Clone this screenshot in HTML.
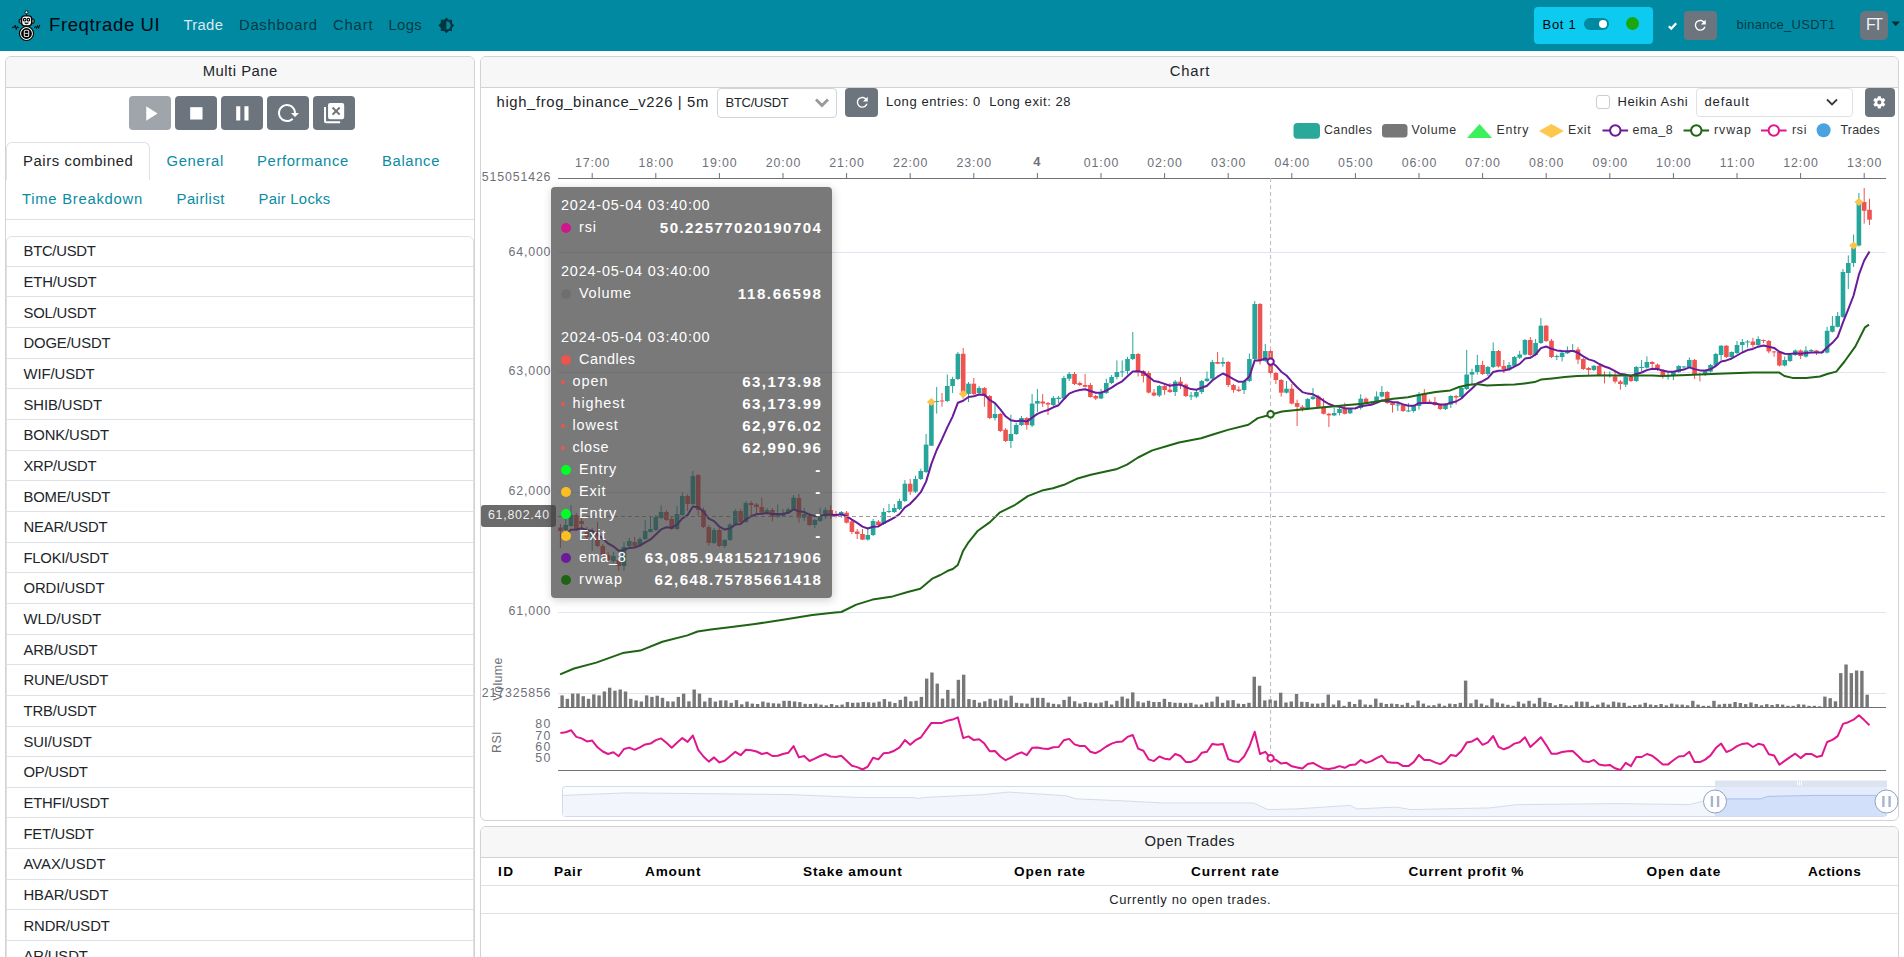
<!DOCTYPE html>
<html><head><meta charset="utf-8"><title>Freqtrade UI</title>
<style>
html,body{margin:0;padding:0;background:#fff;}
body{width:1904px;height:957px;overflow:hidden;position:relative;font-family:"Liberation Sans",sans-serif;}
.t{position:absolute;white-space:nowrap;line-height:1;font-family:"Liberation Sans",sans-serif;}
</style></head><body>
<div style="position:absolute;left:0px;top:0px;width:1904px;height:50.5px;background:#0089a1"></div>
<svg style="position:absolute;left:0;top:0" width="50" height="50" viewBox="0 0 50 50">
<path d="M12 27.3 L14.5 27.3 L15.2 25.2 L16.3 29.5 L17.2 26.5 L18.8 27.8" stroke="#000" stroke-width="1" fill="none"/>
<path d="M34 27.8 L35.5 26.5 L36.5 28.5 L37.5 25.5 L38.5 28.3 L39.8 24.8" stroke="#000" stroke-width="1" fill="none"/>
<line x1="26.5" y1="13.5" x2="26.5" y2="16" stroke="#000" stroke-width="1.1"/>
<circle cx="26.5" cy="12.3" r="1.5" fill="#fff" stroke="#000" stroke-width="0.9"/>
<rect x="19.2" y="19" width="15" height="4.2" rx="1" fill="#888" stroke="#000" stroke-width="1"/>
<rect x="21.6" y="15.8" width="10" height="10" rx="3" fill="#fff" stroke="#000" stroke-width="1.3"/>
<circle cx="24.7" cy="19.7" r="1.3" fill="#fff" stroke="#000" stroke-width="1.1"/>
<circle cx="28.4" cy="19.7" r="1.3" fill="#fff" stroke="#000" stroke-width="1.1"/>
<path d="M24.6 22.9 L28.5 22.9 Q26.5 24.8 24.6 22.9 Z" fill="#000" stroke="#000" stroke-width="0.6"/>
<circle cx="26.5" cy="33.5" r="7" fill="#fff" stroke="#000" stroke-width="1.2"/>
<circle cx="26.5" cy="33.5" r="5.4" fill="#000"/>
<rect x="24.3" y="30.3" width="4.4" height="6.2" rx="1.3" fill="none" stroke="#ddd" stroke-width="1.1"/>
<line x1="24.3" y1="33.4" x2="28.7" y2="33.4" stroke="#ddd" stroke-width="0.9"/>
</svg>
<div class="t" style="left:49.00px;top:15.74px;font-size:18.54px;letter-spacing:0.607px;color:#000814;">Freqtrade UI</div>
<div class="t" style="left:183.50px;top:17.89px;font-size:14.83px;letter-spacing:0.308px;color:rgba(255,255,255,0.85);">Trade</div>
<div class="t" style="left:239.00px;top:17.89px;font-size:14.83px;letter-spacing:0.697px;color:rgba(0,0,0,0.6);">Dashboard</div>
<div class="t" style="left:333.00px;top:17.89px;font-size:14.83px;letter-spacing:0.826px;color:rgba(0,0,0,0.6);">Chart</div>
<div class="t" style="left:388.50px;top:17.89px;font-size:14.83px;letter-spacing:0.355px;color:rgba(0,0,0,0.6);">Logs</div>
<svg style="position:absolute;left:438.20px;top:17.20px" width="16.80" height="16.80" viewBox="0 0 24 24"><path fill="rgba(0,0,0,0.6)" d="M12,18V6A6,6 0 0,1 18,12A6,6 0 0,1 12,18M20,15.31L23.31,12L20,8.69V4H15.31L12,0.69L8.69,4H4V8.69L0.69,12L4,15.31V20H8.69L12,23.31L15.31,20H20V15.31Z"/></svg>
<div style="position:absolute;left:1534px;top:7px;width:119px;height:37px;background:#0dcaf0;border-radius:4px"></div>
<div class="t" style="left:1542.50px;top:18.47px;font-size:12.98px;letter-spacing:0.753px;color:#000;">Bot 1</div>
<div style="position:absolute;left:1584px;top:18px;width:25px;height:12px;background:#0089a1;border-radius:6px"></div>
<div style="position:absolute;left:1598.8px;top:19.8px;width:8.4px;height:8.4px;background:#fff;border-radius:50%"></div>
<div style="position:absolute;left:1626px;top:17px;width:13px;height:13px;background:#1aa80e;border-radius:50%"></div>
<svg style="position:absolute;left:1667px;top:21px" width="11" height="10"><path d="M1.8 5.2 L4.3 7.6 L9.2 2.3" stroke="#fff" stroke-width="2.2" fill="none"/></svg>
<div style="position:absolute;left:1684px;top:11px;width:33px;height:29px;background:#6c757d;border-radius:4px"></div>
<svg style="position:absolute;left:1692.20px;top:17.40px" width="16.50" height="16.50" viewBox="0 0 24 24"><path fill="#fff" d="M17.65,6.35C16.2,4.9 14.21,4 12,4A8,8 0 0,0 4,12A8,8 0 0,0 12,20C15.73,20 18.84,17.45 19.73,14H17.65C16.83,16.33 14.61,18 12,18A6,6 0 0,1 6,12A6,6 0 0,1 12,6C13.66,6 15.14,6.69 16.22,7.78L13,11H20V4L17.65,6.35Z"/></svg>
<div class="t" style="left:1736.50px;top:18.47px;font-size:12.98px;letter-spacing:0.299px;color:rgba(0,0,0,0.6);">binance_USDT1</div>
<div style="position:absolute;left:1860px;top:11px;width:28px;height:29px;background:#6c757d;border-radius:5px"></div>
<div class="t" style="left:1866.09px;top:17.04px;font-size:15.84px;letter-spacing:-2.524px;color:#f1f3f5;">FT</div>
<svg style="position:absolute;left:1891px;top:21px" width="10" height="6" viewBox="0 0 10 6"><path d="M0.5 0.5 L9 0.5 L4.75 5 Z" fill="#000" opacity="0.7"/></svg>
<div style="position:absolute;left:5px;top:56px;width:470px;height:930px;box-sizing:border-box;border:1px solid #d3d3d3;border-radius:6px;background:#fff;overflow:hidden"><div style="height:30px;background:#f7f7f7;border-bottom:1px solid #d3d3d3"></div></div>
<div class="t" style="left:202.69px;top:63.89px;font-size:14.83px;letter-spacing:0.505px;color:#212529;">Multi Pane</div>
<div style="position:absolute;left:129px;top:96px;width:42px;height:34px;background:#a0a5ab;border-radius:4px"></div>
<div style="position:absolute;left:175px;top:96px;width:42px;height:34px;background:#6c757d;border-radius:4px"></div>
<div style="position:absolute;left:221px;top:96px;width:42px;height:34px;background:#6c757d;border-radius:4px"></div>
<div style="position:absolute;left:267px;top:96px;width:42px;height:34px;background:#6c757d;border-radius:4px"></div>
<div style="position:absolute;left:313px;top:96px;width:42px;height:34px;background:#6c757d;border-radius:4px"></div>
<svg style="position:absolute;left:137.50px;top:100.50px" width="24.70" height="24.70" viewBox="0 0 24 24"><path fill="#fff" d="M8,5.14V19.14L19,12.14L8,5.14Z"/></svg>
<svg style="position:absolute;left:183.60px;top:100.80px" width="24.70" height="24.70" viewBox="0 0 24 24"><path fill="#fff" d="M18,18H6V6H18V18Z"/></svg>
<svg style="position:absolute;left:229.50px;top:100.65px" width="24.70" height="24.70" viewBox="0 0 24 24"><path fill="#fff" d="M14,19H18V5H14M6,19H10V5H6V19Z"/></svg>
<svg style="position:absolute;left:276.00px;top:101.00px" width="24.00" height="24.00" viewBox="0 0 24 24"><path fill="#fff" d="M2 12C2 16.97 6.03 21 11 21C13.39 21 15.68 20.06 17.4 18.4L15.9 16.9C14.63 18.25 12.86 19 11 19C4.76 19 1.64 11.46 6.05 7.05C10.46 2.64 18 5.77 18 12H15L19 16H19.1L23 12H20C20 7.03 15.97 3 11 3C6.03 3 2 7.03 2 12Z"/></svg>
<svg style="position:absolute;left:321.80px;top:101.00px" width="24.20" height="24.20" viewBox="0 0 24 24"><path fill-rule="evenodd" fill="#fff" d="M20,2H8A2,2 0 0,0 6,4V16A2,2 0 0,0 8,18H20A2,2 0 0,0 22,16V4A2,2 0 0,0 20,2M4,6H2V20A2,2 0 0,0 4,22H18V20H4V6M9.77,12.84L12.6,10L9.77,7.15L11.17,5.75L14,8.6L16.84,5.75L18.24,7.15L15.4,10L18.24,12.84L16.84,14.25L14,11.4L11.17,14.25L9.77,12.84Z"/></svg>
<div style="position:absolute;left:6px;top:142px;width:144px;height:38px;box-sizing:border-box;border:1px solid #dee2e6;border-bottom:none;border-radius:6px 6px 0 0;background:#fff"></div>
<div class="t" style="left:23.00px;top:153.89px;font-size:14.83px;letter-spacing:0.590px;color:#212529;">Pairs combined</div>
<div class="t" style="left:166.50px;top:153.89px;font-size:14.83px;letter-spacing:0.664px;color:#0b8ba3;">General</div>
<div class="t" style="left:257.00px;top:153.89px;font-size:14.83px;letter-spacing:0.635px;color:#0b8ba3;">Performance</div>
<div class="t" style="left:382.00px;top:153.89px;font-size:14.83px;letter-spacing:0.639px;color:#0b8ba3;">Balance</div>
<div class="t" style="left:22.00px;top:191.89px;font-size:14.83px;letter-spacing:0.727px;color:#0b8ba3;">Time Breakdown</div>
<div class="t" style="left:176.50px;top:191.89px;font-size:14.83px;letter-spacing:0.490px;color:#0b8ba3;">Pairlist</div>
<div class="t" style="left:258.50px;top:191.89px;font-size:14.83px;letter-spacing:0.273px;color:#0b8ba3;">Pair Locks</div>
<div style="position:absolute;left:6px;top:219px;width:468px;height:1px;background:#dee2e6"></div>
<div style="position:absolute;left:6px;top:236px;width:468px;height:740px;box-sizing:border-box;border:1px solid #dee2e6;border-radius:6px"></div>
<div class="t" style="left:23.50px;top:243.89px;font-size:14.83px;letter-spacing:-0.265px;color:#212529;">BTC/USDT</div>
<div style="position:absolute;left:7px;top:266px;width:466px;height:1px;background:#dee2e6"></div>
<div class="t" style="left:23.50px;top:274.89px;font-size:14.83px;letter-spacing:-0.146px;color:#212529;">ETH/USDT</div>
<div style="position:absolute;left:7px;top:296px;width:466px;height:1px;background:#dee2e6"></div>
<div class="t" style="left:23.50px;top:305.89px;font-size:14.83px;letter-spacing:-0.180px;color:#212529;">SOL/USDT</div>
<div style="position:absolute;left:7px;top:327px;width:466px;height:1px;background:#dee2e6"></div>
<div class="t" style="left:23.50px;top:335.89px;font-size:14.83px;letter-spacing:-0.135px;color:#212529;">DOGE/USDT</div>
<div style="position:absolute;left:7px;top:358px;width:466px;height:1px;background:#dee2e6"></div>
<div class="t" style="left:23.50px;top:366.89px;font-size:14.83px;letter-spacing:-0.070px;color:#212529;">WIF/USDT</div>
<div style="position:absolute;left:7px;top:388px;width:466px;height:1px;background:#dee2e6"></div>
<div class="t" style="left:23.50px;top:397.89px;font-size:14.83px;letter-spacing:-0.075px;color:#212529;">SHIB/USDT</div>
<div style="position:absolute;left:7px;top:419px;width:466px;height:1px;background:#dee2e6"></div>
<div class="t" style="left:23.50px;top:427.89px;font-size:14.83px;letter-spacing:-0.117px;color:#212529;">BONK/USDT</div>
<div style="position:absolute;left:7px;top:450px;width:466px;height:1px;background:#dee2e6"></div>
<div class="t" style="left:23.50px;top:458.89px;font-size:14.83px;letter-spacing:-0.290px;color:#212529;">XRP/USDT</div>
<div style="position:absolute;left:7px;top:480px;width:466px;height:1px;background:#dee2e6"></div>
<div class="t" style="left:23.50px;top:489.89px;font-size:14.83px;letter-spacing:-0.159px;color:#212529;">BOME/USDT</div>
<div style="position:absolute;left:7px;top:511px;width:466px;height:1px;background:#dee2e6"></div>
<div class="t" style="left:23.50px;top:519.89px;font-size:14.83px;letter-spacing:-0.195px;color:#212529;">NEAR/USDT</div>
<div style="position:absolute;left:7px;top:542px;width:466px;height:1px;background:#dee2e6"></div>
<div class="t" style="left:23.50px;top:550.89px;font-size:14.83px;letter-spacing:-0.235px;color:#212529;">FLOKI/USDT</div>
<div style="position:absolute;left:7px;top:572px;width:466px;height:1px;background:#dee2e6"></div>
<div class="t" style="left:23.50px;top:580.89px;font-size:14.83px;letter-spacing:-0.060px;color:#212529;">ORDI/USDT</div>
<div style="position:absolute;left:7px;top:603px;width:466px;height:1px;background:#dee2e6"></div>
<div class="t" style="left:23.50px;top:611.89px;font-size:14.83px;letter-spacing:0.044px;color:#212529;">WLD/USDT</div>
<div style="position:absolute;left:7px;top:634px;width:466px;height:1px;background:#dee2e6"></div>
<div class="t" style="left:23.50px;top:642.89px;font-size:14.83px;letter-spacing:-0.120px;color:#212529;">ARB/USDT</div>
<div style="position:absolute;left:7px;top:664px;width:466px;height:1px;background:#dee2e6"></div>
<div class="t" style="left:23.50px;top:672.89px;font-size:14.83px;letter-spacing:-0.212px;color:#212529;">RUNE/USDT</div>
<div style="position:absolute;left:7px;top:695px;width:466px;height:1px;background:#dee2e6"></div>
<div class="t" style="left:23.50px;top:703.89px;font-size:14.83px;letter-spacing:-0.152px;color:#212529;">TRB/USDT</div>
<div style="position:absolute;left:7px;top:726px;width:466px;height:1px;background:#dee2e6"></div>
<div class="t" style="left:23.50px;top:734.89px;font-size:14.83px;letter-spacing:-0.125px;color:#212529;">SUI/USDT</div>
<div style="position:absolute;left:7px;top:756px;width:466px;height:1px;background:#dee2e6"></div>
<div class="t" style="left:23.50px;top:764.89px;font-size:14.83px;letter-spacing:-0.249px;color:#212529;">OP/USDT</div>
<div style="position:absolute;left:7px;top:787px;width:466px;height:1px;background:#dee2e6"></div>
<div class="t" style="left:23.50px;top:795.89px;font-size:14.83px;letter-spacing:-0.186px;color:#212529;">ETHFI/USDT</div>
<div style="position:absolute;left:7px;top:817px;width:466px;height:1px;background:#dee2e6"></div>
<div class="t" style="left:23.50px;top:826.89px;font-size:14.83px;letter-spacing:-0.274px;color:#212529;">FET/USDT</div>
<div style="position:absolute;left:7px;top:848px;width:466px;height:1px;background:#dee2e6"></div>
<div class="t" style="left:23.50px;top:856.89px;font-size:14.83px;letter-spacing:0.015px;color:#212529;">AVAX/USDT</div>
<div style="position:absolute;left:7px;top:879px;width:466px;height:1px;background:#dee2e6"></div>
<div class="t" style="left:23.50px;top:887.89px;font-size:14.83px;letter-spacing:-0.091px;color:#212529;">HBAR/USDT</div>
<div style="position:absolute;left:7px;top:909px;width:466px;height:1px;background:#dee2e6"></div>
<div class="t" style="left:23.50px;top:918.89px;font-size:14.83px;letter-spacing:-0.132px;color:#212529;">RNDR/USDT</div>
<div style="position:absolute;left:7px;top:940px;width:466px;height:1px;background:#dee2e6"></div>
<div class="t" style="left:23.50px;top:948.89px;font-size:14.83px;letter-spacing:-0.138px;color:#212529;">AR/USDT</div>
<div style="position:absolute;left:480px;top:56px;width:1419px;height:765px;box-sizing:border-box;border:1px solid #d3d3d3;border-radius:6px;background:#fff;overflow:hidden"><div style="height:30px;background:#f7f7f7;border-bottom:1px solid #d3d3d3"></div></div>
<div class="t" style="left:1169.71px;top:63.89px;font-size:14.83px;letter-spacing:0.826px;color:#212529;">Chart</div>
<div class="t" style="left:496.50px;top:94.89px;font-size:14.83px;letter-spacing:0.641px;color:#212529;">high_frog_binance_v226 | 5m</div>
<div style="position:absolute;left:717px;top:88px;width:120px;height:30px;box-sizing:border-box;border:1px solid #ced4da;border-radius:4px;background:#fff"></div>
<div class="t" style="left:725.50px;top:96.47px;font-size:12.98px;letter-spacing:-0.232px;color:#212529;">BTC/USDT</div>
<svg style="position:absolute;left:813px;top:96px" width="18" height="12" viewBox="0 0 18 12"><path d="M3 3.5 L9 9.5 L15 3.5" stroke="#999" stroke-width="2.8" fill="none"/></svg>
<div style="position:absolute;left:845px;top:88px;width:33px;height:28.5px;background:#6c757d;border-radius:4px"></div>
<svg style="position:absolute;left:853.50px;top:94.00px" width="16.50" height="16.50" viewBox="0 0 24 24"><path fill="#fff" d="M17.65,6.35C16.2,4.9 14.21,4 12,4A8,8 0 0,0 4,12A8,8 0 0,0 12,20C15.73,20 18.84,17.45 19.73,14H17.65C16.83,16.33 14.61,18 12,18A6,6 0 0,1 6,12A6,6 0 0,1 12,6C13.66,6 15.14,6.69 16.22,7.78L13,11H20V4L17.65,6.35Z"/></svg>
<div class="t" style="left:886.00px;top:95.47px;font-size:12.98px;letter-spacing:0.596px;color:#212529;white-space:pre;">Long entries: 0  Long exit: 28</div>
<div style="position:absolute;left:1596px;top:95px;width:14px;height:14px;box-sizing:border-box;border:1px solid #c7cdd3;border-radius:3px;background:#fff"></div>
<div class="t" style="left:1617.50px;top:95.47px;font-size:12.98px;letter-spacing:0.599px;color:#212529;">Heikin Ashi</div>
<div style="position:absolute;left:1696px;top:88px;width:157px;height:29px;box-sizing:border-box;border:1px solid #dee2e6;border-radius:4px;background:#fff"></div>
<div class="t" style="left:1704.50px;top:95.47px;font-size:12.98px;letter-spacing:0.895px;color:#212529;">default</div>
<svg style="position:absolute;left:1825px;top:97px" width="14" height="10" viewBox="0 0 14 10"><path d="M2 2.5 L7 7.5 L12 2.5" stroke="#343a40" stroke-width="1.8" fill="none"/></svg>
<div style="position:absolute;left:1865px;top:88px;width:30px;height:28.5px;background:#6c757d;border-radius:4px"></div>
<svg style="position:absolute;left:1872.20px;top:94.60px" width="14.60" height="14.60" viewBox="0 0 24 24"><path fill="#fff" d="M12,15.5A3.5,3.5 0 0,1 8.5,12A3.5,3.5 0 0,1 12,8.5A3.5,3.5 0 0,1 15.5,12A3.5,3.5 0 0,1 12,15.5M19.43,12.97C19.47,12.65 19.5,12.33 19.5,12C19.5,11.67 19.47,11.34 19.43,11L21.54,9.37C21.73,9.22 21.78,8.95 21.66,8.73L19.66,5.27C19.54,5.05 19.27,4.96 19.05,5.05L16.56,6.05C16.04,5.66 15.5,5.32 14.87,5.07L14.5,2.42C14.46,2.18 14.25,2 14,2H10C9.75,2 9.54,2.18 9.5,2.42L9.13,5.07C8.5,5.32 7.96,5.66 7.44,6.05L4.95,5.05C4.73,4.96 4.46,5.05 4.34,5.27L2.340,8.73C2.21,8.95 2.27,9.22 2.46,9.37L4.57,11C4.53,11.34 4.5,11.67 4.5,12C4.5,12.33 4.53,12.65 4.57,12.97L2.46,14.63C2.27,14.78 2.21,15.05 2.34,15.27L4.34,18.73C4.46,18.95 4.73,19.030 4.95,18.95L7.44,17.94C7.96,18.34 8.5,18.68 9.13,18.93L9.5,21.58C9.54,21.82 9.75,22 10,22H14C14.25,22 14.46,21.82 14.5,21.58L14.87,18.93C15.5,18.67 16.04,18.34 16.56,17.94L19.05,18.95C19.27,19.03 19.54,18.95 19.66,18.73L21.66,15.27C21.78,15.05 21.73,14.78 21.54,14.63L19.43,12.97Z"/></svg>
<div class="t" style="left:1324.00px;top:123.99px;font-size:12.36px;letter-spacing:0.430px;color:#333;">Candles</div>
<div class="t" style="left:1411.50px;top:123.99px;font-size:12.36px;letter-spacing:0.681px;color:#333;">Volume</div>
<div class="t" style="left:1496.50px;top:123.99px;font-size:12.36px;letter-spacing:0.770px;color:#333;">Entry</div>
<div class="t" style="left:1568.00px;top:123.99px;font-size:12.36px;letter-spacing:0.706px;color:#333;">Exit</div>
<div class="t" style="left:1632.50px;top:123.99px;font-size:12.36px;letter-spacing:0.568px;color:#333;">ema_8</div>
<div class="t" style="left:1714.00px;top:123.99px;font-size:12.36px;letter-spacing:0.963px;color:#333;">rvwap</div>
<div class="t" style="left:1792.00px;top:123.99px;font-size:12.36px;letter-spacing:0.738px;color:#333;">rsi</div>
<div class="t" style="left:1840.50px;top:123.99px;font-size:12.36px;letter-spacing:0.220px;color:#333;">Trades</div>
<div class="t" style="left:574.91px;top:156.99px;font-size:12.36px;letter-spacing:0.914px;color:#6e7079;">17:00</div>
<div class="t" style="left:638.51px;top:156.99px;font-size:12.36px;letter-spacing:0.914px;color:#6e7079;">18:00</div>
<div class="t" style="left:702.11px;top:156.99px;font-size:12.36px;letter-spacing:0.914px;color:#6e7079;">19:00</div>
<div class="t" style="left:765.71px;top:156.99px;font-size:12.36px;letter-spacing:0.914px;color:#6e7079;">20:00</div>
<div class="t" style="left:829.31px;top:156.99px;font-size:12.36px;letter-spacing:0.914px;color:#6e7079;">21:00</div>
<div class="t" style="left:892.91px;top:156.99px;font-size:12.36px;letter-spacing:0.914px;color:#6e7079;">22:00</div>
<div class="t" style="left:956.51px;top:156.99px;font-size:12.36px;letter-spacing:0.914px;color:#6e7079;">23:00</div>
<div class="t" style="left:1033.23px;top:156.48px;font-size:12.96px;letter-spacing:1.142px;color:#6e7079;font-weight:700;">4</div>
<div class="t" style="left:1083.71px;top:156.99px;font-size:12.36px;letter-spacing:0.914px;color:#6e7079;">01:00</div>
<div class="t" style="left:1147.31px;top:156.99px;font-size:12.36px;letter-spacing:0.914px;color:#6e7079;">02:00</div>
<div class="t" style="left:1210.91px;top:156.99px;font-size:12.36px;letter-spacing:0.914px;color:#6e7079;">03:00</div>
<div class="t" style="left:1274.51px;top:156.99px;font-size:12.36px;letter-spacing:0.914px;color:#6e7079;">04:00</div>
<div class="t" style="left:1338.11px;top:156.99px;font-size:12.36px;letter-spacing:0.914px;color:#6e7079;">05:00</div>
<div class="t" style="left:1401.71px;top:156.99px;font-size:12.36px;letter-spacing:0.914px;color:#6e7079;">06:00</div>
<div class="t" style="left:1465.31px;top:156.99px;font-size:12.36px;letter-spacing:0.914px;color:#6e7079;">07:00</div>
<div class="t" style="left:1528.91px;top:156.99px;font-size:12.36px;letter-spacing:0.914px;color:#6e7079;">08:00</div>
<div class="t" style="left:1592.51px;top:156.99px;font-size:12.36px;letter-spacing:0.914px;color:#6e7079;">09:00</div>
<div class="t" style="left:1656.11px;top:156.99px;font-size:12.36px;letter-spacing:0.914px;color:#6e7079;">10:00</div>
<div class="t" style="left:1719.71px;top:156.99px;font-size:12.36px;letter-spacing:1.143px;color:#6e7079;">11:00</div>
<div class="t" style="left:1783.31px;top:156.99px;font-size:12.36px;letter-spacing:0.914px;color:#6e7079;">12:00</div>
<div class="t" style="left:1846.91px;top:156.99px;font-size:12.36px;letter-spacing:0.914px;color:#6e7079;">13:00</div>
<div class="t" style="left:481.78px;top:170.99px;font-size:12.36px;letter-spacing:0.857px;color:#6e7079;">515051426</div>
<div class="t" style="left:508.51px;top:245.99px;font-size:12.36px;letter-spacing:0.838px;color:#6e7079;">64,000</div>
<div class="t" style="left:508.51px;top:364.99px;font-size:12.36px;letter-spacing:0.838px;color:#6e7079;">63,000</div>
<div class="t" style="left:508.51px;top:484.99px;font-size:12.36px;letter-spacing:0.838px;color:#6e7079;">62,000</div>
<div class="t" style="left:508.51px;top:604.99px;font-size:12.36px;letter-spacing:0.838px;color:#6e7079;">61,000</div>
<div class="t" style="left:481.78px;top:686.99px;font-size:12.36px;letter-spacing:0.857px;color:#6e7079;">217325856</div>
<div class="t" style="left:535.23px;top:717.99px;font-size:12.36px;letter-spacing:1.523px;color:#6e7079;">80</div>
<div class="t" style="left:535.23px;top:729.99px;font-size:12.36px;letter-spacing:1.523px;color:#6e7079;">70</div>
<div class="t" style="left:535.23px;top:740.99px;font-size:12.36px;letter-spacing:1.523px;color:#6e7079;">60</div>
<div class="t" style="left:535.23px;top:751.99px;font-size:12.36px;letter-spacing:1.523px;color:#6e7079;">50</div>
<div class="t" style="left:467.5px;top:672px;width:60px;text-align:center;font-size:12.36px;letter-spacing:0.4px;color:#6e7079;transform:rotate(-90deg);line-height:14px">Volume</div>
<div class="t" style="left:467px;top:734.5px;width:60px;text-align:center;font-size:12.36px;letter-spacing:0.4px;color:#6e7079;transform:rotate(-90deg);line-height:14px">RSI</div>
<svg style="position:absolute;left:0;top:0" width="1904" height="957"><rect x="1293.5" y="123" width="26.5" height="15.7" rx="4" fill="#2aa89a"/><rect x="1382" y="124" width="25.5" height="13.5" rx="3.5" fill="#777"/><path d="M1467 138 L1479.5 124 L1492 138 Z" fill="#3cf05c"/><path d="M1539 131 L1551.4 124 L1563.8 131 L1551.4 138 Z" fill="#fcc850"/><line x1="1602.5" y1="130.5" x2="1628.1" y2="130.5" stroke="#6a1b9a" stroke-width="2"/><circle cx="1615.3" cy="130.5" r="5.2" fill="#fff" stroke="#6a1b9a" stroke-width="2"/><line x1="1683.5" y1="130.5" x2="1709.1" y2="130.5" stroke="#1e6414" stroke-width="2"/><circle cx="1696.3" cy="130.5" r="5.2" fill="#fff" stroke="#1e6414" stroke-width="2"/><line x1="1761.0" y1="130.5" x2="1786.6" y2="130.5" stroke="#e0168c" stroke-width="2"/><circle cx="1773.8" cy="130.5" r="5.2" fill="#fff" stroke="#e0168c" stroke-width="2"/><circle cx="1823.6" cy="130.3" r="7" fill="#4aa3df"/><line x1="558" y1="252.5" x2="1886" y2="252.5" stroke="#e0e6f1" stroke-width="1"/><line x1="558" y1="372.5" x2="1886" y2="372.5" stroke="#e0e6f1" stroke-width="1"/><line x1="558" y1="492.5" x2="1886" y2="492.5" stroke="#e0e6f1" stroke-width="1"/><line x1="558" y1="612.5" x2="1886" y2="612.5" stroke="#e0e6f1" stroke-width="1"/><line x1="558" y1="693.5" x2="1886" y2="693.5" stroke="#e0e6f1" stroke-width="1"/><line x1="558" y1="178.5" x2="1886" y2="178.5" stroke="#6e7079" stroke-width="1"/><line x1="592.2" y1="173" x2="592.2" y2="178" stroke="#6e7079" stroke-width="1"/><line x1="655.8" y1="173" x2="655.8" y2="178" stroke="#6e7079" stroke-width="1"/><line x1="719.4" y1="173" x2="719.4" y2="178" stroke="#6e7079" stroke-width="1"/><line x1="783.0" y1="173" x2="783.0" y2="178" stroke="#6e7079" stroke-width="1"/><line x1="846.6" y1="173" x2="846.6" y2="178" stroke="#6e7079" stroke-width="1"/><line x1="910.2" y1="173" x2="910.2" y2="178" stroke="#6e7079" stroke-width="1"/><line x1="973.8" y1="173" x2="973.8" y2="178" stroke="#6e7079" stroke-width="1"/><line x1="1037.4" y1="173" x2="1037.4" y2="178" stroke="#6e7079" stroke-width="1"/><line x1="1101.0" y1="173" x2="1101.0" y2="178" stroke="#6e7079" stroke-width="1"/><line x1="1164.6" y1="173" x2="1164.6" y2="178" stroke="#6e7079" stroke-width="1"/><line x1="1228.2" y1="173" x2="1228.2" y2="178" stroke="#6e7079" stroke-width="1"/><line x1="1291.8" y1="173" x2="1291.8" y2="178" stroke="#6e7079" stroke-width="1"/><line x1="1355.4" y1="173" x2="1355.4" y2="178" stroke="#6e7079" stroke-width="1"/><line x1="1419.0" y1="173" x2="1419.0" y2="178" stroke="#6e7079" stroke-width="1"/><line x1="1482.6" y1="173" x2="1482.6" y2="178" stroke="#6e7079" stroke-width="1"/><line x1="1546.2" y1="173" x2="1546.2" y2="178" stroke="#6e7079" stroke-width="1"/><line x1="1609.8" y1="173" x2="1609.8" y2="178" stroke="#6e7079" stroke-width="1"/><line x1="1673.4" y1="173" x2="1673.4" y2="178" stroke="#6e7079" stroke-width="1"/><line x1="1737.0" y1="173" x2="1737.0" y2="178" stroke="#6e7079" stroke-width="1"/><line x1="1800.6" y1="173" x2="1800.6" y2="178" stroke="#6e7079" stroke-width="1"/><line x1="1864.2" y1="173" x2="1864.2" y2="178" stroke="#6e7079" stroke-width="1"/><line x1="558" y1="707.5" x2="1886" y2="707.5" stroke="#6e7079" stroke-width="1"/><line x1="558" y1="770.5" x2="1886" y2="770.5" stroke="#6e7079" stroke-width="1"/><rect x="560.40" y="695.40" width="3.4" height="11.60" fill="#777"/><rect x="565.68" y="698.80" width="3.4" height="8.20" fill="#777"/><rect x="570.97" y="693.60" width="3.4" height="13.40" fill="#777"/><rect x="576.25" y="693.60" width="3.4" height="13.40" fill="#777"/><rect x="581.53" y="696.20" width="3.4" height="10.80" fill="#777"/><rect x="586.82" y="698.80" width="3.4" height="8.20" fill="#777"/><rect x="592.10" y="694.40" width="3.4" height="12.60" fill="#777"/><rect x="597.39" y="695.40" width="3.4" height="11.60" fill="#777"/><rect x="602.67" y="691.50" width="3.4" height="15.50" fill="#777"/><rect x="607.95" y="687.70" width="3.4" height="19.30" fill="#777"/><rect x="613.24" y="690.70" width="3.4" height="16.30" fill="#777"/><rect x="618.52" y="689.50" width="3.4" height="17.50" fill="#777"/><rect x="623.80" y="691.50" width="3.4" height="15.50" fill="#777"/><rect x="629.09" y="698.80" width="3.4" height="8.20" fill="#777"/><rect x="634.37" y="700.40" width="3.4" height="6.60" fill="#777"/><rect x="639.66" y="701.50" width="3.4" height="5.50" fill="#777"/><rect x="644.94" y="695.40" width="3.4" height="11.60" fill="#777"/><rect x="650.22" y="696.90" width="3.4" height="10.10" fill="#777"/><rect x="655.51" y="695.70" width="3.4" height="11.30" fill="#777"/><rect x="660.79" y="697.80" width="3.4" height="9.20" fill="#777"/><rect x="666.07" y="701.30" width="3.4" height="5.70" fill="#777"/><rect x="671.36" y="701.50" width="3.4" height="5.50" fill="#777"/><rect x="676.64" y="696.90" width="3.4" height="10.10" fill="#777"/><rect x="681.93" y="693.60" width="3.4" height="13.40" fill="#777"/><rect x="687.21" y="701.30" width="3.4" height="5.70" fill="#777"/><rect x="692.49" y="689.50" width="3.4" height="17.50" fill="#777"/><rect x="697.78" y="693.60" width="3.4" height="13.40" fill="#777"/><rect x="703.06" y="701.50" width="3.4" height="5.50" fill="#777"/><rect x="708.34" y="697.80" width="3.4" height="9.20" fill="#777"/><rect x="713.63" y="701.60" width="3.4" height="5.40" fill="#777"/><rect x="718.91" y="700.40" width="3.4" height="6.60" fill="#777"/><rect x="724.19" y="700.40" width="3.4" height="6.60" fill="#777"/><rect x="729.48" y="702.80" width="3.4" height="4.20" fill="#777"/><rect x="734.76" y="700.10" width="3.4" height="6.90" fill="#777"/><rect x="740.05" y="704.30" width="3.4" height="2.70" fill="#777"/><rect x="745.33" y="701.60" width="3.4" height="5.40" fill="#777"/><rect x="750.61" y="703.60" width="3.4" height="3.40" fill="#777"/><rect x="755.90" y="704.00" width="3.4" height="3.00" fill="#777"/><rect x="761.18" y="701.50" width="3.4" height="5.50" fill="#777"/><rect x="766.46" y="702.60" width="3.4" height="4.40" fill="#777"/><rect x="771.75" y="703.30" width="3.4" height="3.70" fill="#777"/><rect x="777.03" y="703.60" width="3.4" height="3.40" fill="#777"/><rect x="782.32" y="700.80" width="3.4" height="6.20" fill="#777"/><rect x="787.60" y="700.80" width="3.4" height="6.20" fill="#777"/><rect x="792.88" y="701.50" width="3.4" height="5.50" fill="#777"/><rect x="798.17" y="702.10" width="3.4" height="4.90" fill="#777"/><rect x="803.45" y="703.80" width="3.4" height="3.20" fill="#777"/><rect x="808.73" y="704.00" width="3.4" height="3.00" fill="#777"/><rect x="814.02" y="703.50" width="3.4" height="3.50" fill="#777"/><rect x="819.30" y="704.60" width="3.4" height="2.40" fill="#777"/><rect x="824.59" y="705.30" width="3.4" height="1.70" fill="#777"/><rect x="829.87" y="704.00" width="3.4" height="3.00" fill="#777"/><rect x="835.15" y="705.20" width="3.4" height="1.80" fill="#777"/><rect x="840.44" y="704.60" width="3.4" height="2.40" fill="#777"/><rect x="845.72" y="702.00" width="3.4" height="5.00" fill="#777"/><rect x="851.00" y="702.80" width="3.4" height="4.20" fill="#777"/><rect x="856.29" y="702.60" width="3.4" height="4.40" fill="#777"/><rect x="861.57" y="702.00" width="3.4" height="5.00" fill="#777"/><rect x="866.85" y="702.30" width="3.4" height="4.70" fill="#777"/><rect x="872.14" y="702.60" width="3.4" height="4.40" fill="#777"/><rect x="877.42" y="701.60" width="3.4" height="5.40" fill="#777"/><rect x="882.71" y="699.10" width="3.4" height="7.90" fill="#777"/><rect x="887.99" y="701.60" width="3.4" height="5.40" fill="#777"/><rect x="893.27" y="703.00" width="3.4" height="4.00" fill="#777"/><rect x="898.56" y="699.90" width="3.4" height="7.10" fill="#777"/><rect x="903.84" y="696.60" width="3.4" height="10.40" fill="#777"/><rect x="909.12" y="701.30" width="3.4" height="5.70" fill="#777"/><rect x="914.41" y="700.80" width="3.4" height="6.20" fill="#777"/><rect x="919.69" y="696.90" width="3.4" height="10.10" fill="#777"/><rect x="924.98" y="678.60" width="3.4" height="28.40" fill="#777"/><rect x="930.26" y="672.50" width="3.4" height="34.50" fill="#777"/><rect x="935.54" y="683.60" width="3.4" height="23.40" fill="#777"/><rect x="940.83" y="698.60" width="3.4" height="8.40" fill="#777"/><rect x="946.11" y="689.90" width="3.4" height="17.10" fill="#777"/><rect x="951.39" y="698.60" width="3.4" height="8.40" fill="#777"/><rect x="956.68" y="679.80" width="3.4" height="27.20" fill="#777"/><rect x="961.96" y="674.70" width="3.4" height="32.30" fill="#777"/><rect x="967.24" y="699.10" width="3.4" height="7.90" fill="#777"/><rect x="972.53" y="699.90" width="3.4" height="7.10" fill="#777"/><rect x="977.81" y="702.60" width="3.4" height="4.40" fill="#777"/><rect x="983.10" y="701.30" width="3.4" height="5.70" fill="#777"/><rect x="988.38" y="698.80" width="3.4" height="8.20" fill="#777"/><rect x="993.66" y="700.40" width="3.4" height="6.60" fill="#777"/><rect x="998.95" y="698.60" width="3.4" height="8.40" fill="#777"/><rect x="1004.23" y="700.40" width="3.4" height="6.60" fill="#777"/><rect x="1009.51" y="695.70" width="3.4" height="11.30" fill="#777"/><rect x="1014.80" y="702.80" width="3.4" height="4.20" fill="#777"/><rect x="1020.08" y="703.30" width="3.4" height="3.70" fill="#777"/><rect x="1025.37" y="703.60" width="3.4" height="3.40" fill="#777"/><rect x="1030.65" y="697.80" width="3.4" height="9.20" fill="#777"/><rect x="1035.93" y="697.80" width="3.4" height="9.20" fill="#777"/><rect x="1041.22" y="697.90" width="3.4" height="9.10" fill="#777"/><rect x="1046.50" y="702.60" width="3.4" height="4.40" fill="#777"/><rect x="1051.78" y="703.80" width="3.4" height="3.20" fill="#777"/><rect x="1057.07" y="704.30" width="3.4" height="2.70" fill="#777"/><rect x="1062.35" y="699.90" width="3.4" height="7.10" fill="#777"/><rect x="1067.64" y="696.60" width="3.4" height="10.40" fill="#777"/><rect x="1072.92" y="701.30" width="3.4" height="5.70" fill="#777"/><rect x="1078.20" y="703.50" width="3.4" height="3.50" fill="#777"/><rect x="1083.49" y="702.00" width="3.4" height="5.00" fill="#777"/><rect x="1088.77" y="702.60" width="3.4" height="4.40" fill="#777"/><rect x="1094.05" y="703.30" width="3.4" height="3.70" fill="#777"/><rect x="1099.34" y="702.50" width="3.4" height="4.50" fill="#777"/><rect x="1104.62" y="700.80" width="3.4" height="6.20" fill="#777"/><rect x="1109.90" y="704.50" width="3.4" height="2.50" fill="#777"/><rect x="1115.19" y="700.80" width="3.4" height="6.20" fill="#777"/><rect x="1120.47" y="696.60" width="3.4" height="10.40" fill="#777"/><rect x="1125.76" y="698.60" width="3.4" height="8.40" fill="#777"/><rect x="1131.04" y="692.40" width="3.4" height="14.60" fill="#777"/><rect x="1136.32" y="701.30" width="3.4" height="5.70" fill="#777"/><rect x="1141.61" y="702.60" width="3.4" height="4.40" fill="#777"/><rect x="1146.89" y="700.80" width="3.4" height="6.20" fill="#777"/><rect x="1152.17" y="702.00" width="3.4" height="5.00" fill="#777"/><rect x="1157.46" y="702.00" width="3.4" height="5.00" fill="#777"/><rect x="1162.74" y="698.80" width="3.4" height="8.20" fill="#777"/><rect x="1168.03" y="702.00" width="3.4" height="5.00" fill="#777"/><rect x="1173.31" y="702.80" width="3.4" height="4.20" fill="#777"/><rect x="1178.59" y="702.80" width="3.4" height="4.20" fill="#777"/><rect x="1183.88" y="703.30" width="3.4" height="3.70" fill="#777"/><rect x="1189.16" y="702.80" width="3.4" height="4.20" fill="#777"/><rect x="1194.44" y="704.50" width="3.4" height="2.50" fill="#777"/><rect x="1199.73" y="704.50" width="3.4" height="2.50" fill="#777"/><rect x="1205.01" y="702.60" width="3.4" height="4.40" fill="#777"/><rect x="1210.30" y="701.60" width="3.4" height="5.40" fill="#777"/><rect x="1215.58" y="696.60" width="3.4" height="10.40" fill="#777"/><rect x="1220.86" y="702.80" width="3.4" height="4.20" fill="#777"/><rect x="1226.15" y="700.40" width="3.4" height="6.60" fill="#777"/><rect x="1231.43" y="700.10" width="3.4" height="6.90" fill="#777"/><rect x="1236.71" y="703.60" width="3.4" height="3.40" fill="#777"/><rect x="1242.00" y="704.00" width="3.4" height="3.00" fill="#777"/><rect x="1247.28" y="702.80" width="3.4" height="4.20" fill="#777"/><rect x="1252.56" y="676.70" width="3.4" height="30.30" fill="#777"/><rect x="1257.85" y="685.70" width="3.4" height="21.30" fill="#777"/><rect x="1263.13" y="700.40" width="3.4" height="6.60" fill="#777"/><rect x="1268.42" y="699.40" width="3.4" height="7.60" fill="#777"/><rect x="1273.70" y="700.60" width="3.4" height="6.40" fill="#777"/><rect x="1278.98" y="692.70" width="3.4" height="14.30" fill="#777"/><rect x="1284.27" y="702.50" width="3.4" height="4.50" fill="#777"/><rect x="1289.55" y="701.50" width="3.4" height="5.50" fill="#777"/><rect x="1294.83" y="694.00" width="3.4" height="13.00" fill="#777"/><rect x="1300.12" y="701.80" width="3.4" height="5.20" fill="#777"/><rect x="1305.40" y="702.00" width="3.4" height="5.00" fill="#777"/><rect x="1310.69" y="703.60" width="3.4" height="3.40" fill="#777"/><rect x="1315.97" y="703.60" width="3.4" height="3.40" fill="#777"/><rect x="1321.25" y="702.80" width="3.4" height="4.20" fill="#777"/><rect x="1326.54" y="694.60" width="3.4" height="12.40" fill="#777"/><rect x="1331.82" y="704.50" width="3.4" height="2.50" fill="#777"/><rect x="1337.10" y="700.40" width="3.4" height="6.60" fill="#777"/><rect x="1342.39" y="705.80" width="3.4" height="1.20" fill="#777"/><rect x="1347.67" y="701.80" width="3.4" height="5.20" fill="#777"/><rect x="1352.95" y="704.00" width="3.4" height="3.00" fill="#777"/><rect x="1358.24" y="699.60" width="3.4" height="7.40" fill="#777"/><rect x="1363.52" y="704.50" width="3.4" height="2.50" fill="#777"/><rect x="1368.81" y="704.80" width="3.4" height="2.20" fill="#777"/><rect x="1374.09" y="698.60" width="3.4" height="8.40" fill="#777"/><rect x="1379.37" y="702.80" width="3.4" height="4.20" fill="#777"/><rect x="1384.66" y="704.00" width="3.4" height="3.00" fill="#777"/><rect x="1389.94" y="703.60" width="3.4" height="3.40" fill="#777"/><rect x="1395.22" y="704.00" width="3.4" height="3.00" fill="#777"/><rect x="1400.51" y="704.80" width="3.4" height="2.20" fill="#777"/><rect x="1405.79" y="702.80" width="3.4" height="4.20" fill="#777"/><rect x="1411.08" y="705.30" width="3.4" height="1.70" fill="#777"/><rect x="1416.36" y="700.60" width="3.4" height="6.40" fill="#777"/><rect x="1421.64" y="703.60" width="3.4" height="3.40" fill="#777"/><rect x="1426.93" y="705.50" width="3.4" height="1.50" fill="#777"/><rect x="1432.21" y="705.20" width="3.4" height="1.80" fill="#777"/><rect x="1437.49" y="703.60" width="3.4" height="3.40" fill="#777"/><rect x="1442.78" y="705.70" width="3.4" height="1.30" fill="#777"/><rect x="1448.06" y="703.60" width="3.4" height="3.40" fill="#777"/><rect x="1453.35" y="704.00" width="3.4" height="3.00" fill="#777"/><rect x="1458.63" y="702.80" width="3.4" height="4.20" fill="#777"/><rect x="1463.91" y="680.60" width="3.4" height="26.40" fill="#777"/><rect x="1469.20" y="703.30" width="3.4" height="3.70" fill="#777"/><rect x="1474.48" y="699.60" width="3.4" height="7.40" fill="#777"/><rect x="1479.76" y="703.60" width="3.4" height="3.40" fill="#777"/><rect x="1485.05" y="705.30" width="3.4" height="1.70" fill="#777"/><rect x="1490.33" y="698.60" width="3.4" height="8.40" fill="#777"/><rect x="1495.61" y="702.50" width="3.4" height="4.50" fill="#777"/><rect x="1500.90" y="703.60" width="3.4" height="3.40" fill="#777"/><rect x="1506.18" y="704.80" width="3.4" height="2.20" fill="#777"/><rect x="1511.47" y="705.80" width="3.4" height="1.20" fill="#777"/><rect x="1516.75" y="701.60" width="3.4" height="5.40" fill="#777"/><rect x="1522.03" y="703.60" width="3.4" height="3.40" fill="#777"/><rect x="1527.32" y="700.80" width="3.4" height="6.20" fill="#777"/><rect x="1532.60" y="703.60" width="3.4" height="3.40" fill="#777"/><rect x="1537.88" y="697.80" width="3.4" height="9.20" fill="#777"/><rect x="1543.17" y="701.80" width="3.4" height="5.20" fill="#777"/><rect x="1548.45" y="703.00" width="3.4" height="4.00" fill="#777"/><rect x="1553.74" y="705.30" width="3.4" height="1.70" fill="#777"/><rect x="1559.02" y="704.00" width="3.4" height="3.00" fill="#777"/><rect x="1564.30" y="705.30" width="3.4" height="1.70" fill="#777"/><rect x="1569.59" y="705.30" width="3.4" height="1.70" fill="#777"/><rect x="1574.87" y="701.60" width="3.4" height="5.40" fill="#777"/><rect x="1580.15" y="701.60" width="3.4" height="5.40" fill="#777"/><rect x="1585.44" y="701.80" width="3.4" height="5.20" fill="#777"/><rect x="1590.72" y="705.80" width="3.4" height="1.20" fill="#777"/><rect x="1596.01" y="704.60" width="3.4" height="2.40" fill="#777"/><rect x="1601.29" y="702.50" width="3.4" height="4.50" fill="#777"/><rect x="1606.57" y="704.60" width="3.4" height="2.40" fill="#777"/><rect x="1611.86" y="701.60" width="3.4" height="5.40" fill="#777"/><rect x="1617.14" y="702.50" width="3.4" height="4.50" fill="#777"/><rect x="1622.42" y="702.80" width="3.4" height="4.20" fill="#777"/><rect x="1627.71" y="705.80" width="3.4" height="1.20" fill="#777"/><rect x="1632.99" y="705.00" width="3.4" height="2.00" fill="#777"/><rect x="1638.27" y="704.60" width="3.4" height="2.40" fill="#777"/><rect x="1643.56" y="702.80" width="3.4" height="4.20" fill="#777"/><rect x="1648.84" y="704.50" width="3.4" height="2.50" fill="#777"/><rect x="1654.13" y="705.00" width="3.4" height="2.00" fill="#777"/><rect x="1659.41" y="704.00" width="3.4" height="3.00" fill="#777"/><rect x="1664.69" y="705.30" width="3.4" height="1.70" fill="#777"/><rect x="1669.98" y="703.60" width="3.4" height="3.40" fill="#777"/><rect x="1675.26" y="704.50" width="3.4" height="2.50" fill="#777"/><rect x="1680.54" y="704.60" width="3.4" height="2.40" fill="#777"/><rect x="1685.83" y="705.30" width="3.4" height="1.70" fill="#777"/><rect x="1691.11" y="700.80" width="3.4" height="6.20" fill="#777"/><rect x="1696.40" y="704.60" width="3.4" height="2.40" fill="#777"/><rect x="1701.68" y="705.80" width="3.4" height="1.20" fill="#777"/><rect x="1706.96" y="705.80" width="3.4" height="1.20" fill="#777"/><rect x="1712.25" y="700.80" width="3.4" height="6.20" fill="#777"/><rect x="1717.53" y="704.50" width="3.4" height="2.50" fill="#777"/><rect x="1722.81" y="703.80" width="3.4" height="3.20" fill="#777"/><rect x="1728.10" y="703.80" width="3.4" height="3.20" fill="#777"/><rect x="1733.38" y="702.00" width="3.4" height="5.00" fill="#777"/><rect x="1738.67" y="703.00" width="3.4" height="4.00" fill="#777"/><rect x="1743.95" y="704.10" width="3.4" height="2.90" fill="#777"/><rect x="1749.23" y="702.50" width="3.4" height="4.50" fill="#777"/><rect x="1754.52" y="704.00" width="3.4" height="3.00" fill="#777"/><rect x="1759.80" y="705.30" width="3.4" height="1.70" fill="#777"/><rect x="1765.08" y="704.10" width="3.4" height="2.90" fill="#777"/><rect x="1770.37" y="705.00" width="3.4" height="2.00" fill="#777"/><rect x="1775.65" y="704.10" width="3.4" height="2.90" fill="#777"/><rect x="1780.93" y="704.60" width="3.4" height="2.40" fill="#777"/><rect x="1786.22" y="705.80" width="3.4" height="1.20" fill="#777"/><rect x="1791.50" y="705.80" width="3.4" height="1.20" fill="#777"/><rect x="1796.79" y="704.30" width="3.4" height="2.70" fill="#777"/><rect x="1802.07" y="704.60" width="3.4" height="2.40" fill="#777"/><rect x="1807.35" y="705.80" width="3.4" height="1.20" fill="#777"/><rect x="1812.64" y="705.80" width="3.4" height="1.20" fill="#777"/><rect x="1817.92" y="706.30" width="3.4" height="0.70" fill="#777"/><rect x="1823.20" y="696.60" width="3.4" height="10.40" fill="#777"/><rect x="1828.49" y="698.20" width="3.4" height="8.80" fill="#777"/><rect x="1833.77" y="701.30" width="3.4" height="5.70" fill="#777"/><rect x="1839.06" y="673.10" width="3.4" height="33.90" fill="#777"/><rect x="1844.34" y="664.50" width="3.4" height="42.50" fill="#777"/><rect x="1849.62" y="673.10" width="3.4" height="33.90" fill="#777"/><rect x="1854.91" y="670.50" width="3.4" height="36.50" fill="#777"/><rect x="1860.19" y="670.80" width="3.4" height="36.20" fill="#777"/><rect x="1865.47" y="694.70" width="3.4" height="12.30" fill="#777"/><line x1="560.40" y1="524.0" x2="560.40" y2="548.0" stroke="#ef5350" stroke-width="1"/><rect x="558.10" y="527.5" width="4.6" height="3.50" fill="#ef5350"/><line x1="565.70" y1="519.0" x2="565.70" y2="531.0" stroke="#26a69a" stroke-width="1"/><rect x="563.40" y="525.0" width="4.6" height="5.00" fill="#26a69a"/><line x1="571.00" y1="505.0" x2="571.00" y2="527.0" stroke="#26a69a" stroke-width="1"/><rect x="568.70" y="515.0" width="4.6" height="11.00" fill="#26a69a"/><line x1="576.30" y1="513.0" x2="576.30" y2="531.0" stroke="#ef5350" stroke-width="1"/><rect x="574.00" y="515.0" width="4.6" height="14.00" fill="#ef5350"/><line x1="581.60" y1="518.0" x2="581.60" y2="530.0" stroke="#ef5350" stroke-width="1"/><rect x="579.30" y="521.0" width="4.6" height="3.00" fill="#ef5350"/><line x1="586.90" y1="527.0" x2="586.90" y2="539.0" stroke="#ef5350" stroke-width="1"/><rect x="584.60" y="532.0" width="4.6" height="5.00" fill="#ef5350"/><line x1="592.20" y1="528.0" x2="592.20" y2="551.0" stroke="#26a69a" stroke-width="1"/><rect x="589.90" y="533.0" width="4.6" height="4.00" fill="#26a69a"/><line x1="597.50" y1="522.0" x2="597.50" y2="547.0" stroke="#ef5350" stroke-width="1"/><rect x="595.20" y="535.0" width="4.6" height="11.00" fill="#ef5350"/><line x1="602.80" y1="544.0" x2="602.80" y2="557.0" stroke="#ef5350" stroke-width="1"/><rect x="600.50" y="546.0" width="4.6" height="9.00" fill="#ef5350"/><line x1="608.10" y1="552.0" x2="608.10" y2="562.0" stroke="#ef5350" stroke-width="1"/><rect x="605.80" y="555.0" width="4.6" height="5.00" fill="#ef5350"/><line x1="613.40" y1="552.0" x2="613.40" y2="563.0" stroke="#26a69a" stroke-width="1"/><rect x="611.10" y="556.0" width="4.6" height="5.00" fill="#26a69a"/><line x1="618.70" y1="558.0" x2="618.70" y2="571.0" stroke="#ef5350" stroke-width="1"/><rect x="616.40" y="560.0" width="4.6" height="6.00" fill="#ef5350"/><line x1="624.00" y1="542.0" x2="624.00" y2="570.6" stroke="#26a69a" stroke-width="1"/><rect x="621.70" y="547.0" width="4.6" height="19.00" fill="#26a69a"/><line x1="629.30" y1="538.0" x2="629.30" y2="548.0" stroke="#26a69a" stroke-width="1"/><rect x="627.00" y="541.0" width="4.6" height="5.00" fill="#26a69a"/><line x1="634.60" y1="537.0" x2="634.60" y2="548.0" stroke="#ef5350" stroke-width="1"/><rect x="632.30" y="542.0" width="4.6" height="4.00" fill="#ef5350"/><line x1="639.90" y1="537.0" x2="639.90" y2="547.0" stroke="#26a69a" stroke-width="1"/><rect x="637.60" y="539.0" width="4.6" height="7.00" fill="#26a69a"/><line x1="645.20" y1="520.0" x2="645.20" y2="540.0" stroke="#26a69a" stroke-width="1"/><rect x="642.90" y="531.0" width="4.6" height="8.00" fill="#26a69a"/><line x1="650.50" y1="516.0" x2="650.50" y2="532.5" stroke="#26a69a" stroke-width="1"/><rect x="648.20" y="529.0" width="4.6" height="3.00" fill="#26a69a"/><line x1="655.80" y1="515.0" x2="655.80" y2="531.0" stroke="#26a69a" stroke-width="1"/><rect x="653.50" y="517.0" width="4.6" height="13.00" fill="#26a69a"/><line x1="661.10" y1="505.6" x2="661.10" y2="519.0" stroke="#26a69a" stroke-width="1"/><rect x="658.80" y="512.0" width="4.6" height="6.00" fill="#26a69a"/><line x1="666.40" y1="510.0" x2="666.40" y2="521.0" stroke="#ef5350" stroke-width="1"/><rect x="664.10" y="512.0" width="4.6" height="8.00" fill="#ef5350"/><line x1="671.70" y1="517.0" x2="671.70" y2="530.0" stroke="#ef5350" stroke-width="1"/><rect x="669.40" y="519.0" width="4.6" height="10.00" fill="#ef5350"/><line x1="677.00" y1="506.0" x2="677.00" y2="530.0" stroke="#26a69a" stroke-width="1"/><rect x="674.70" y="514.0" width="4.6" height="15.00" fill="#26a69a"/><line x1="682.30" y1="492.5" x2="682.30" y2="516.0" stroke="#26a69a" stroke-width="1"/><rect x="680.00" y="496.0" width="4.6" height="19.00" fill="#26a69a"/><line x1="687.60" y1="494.0" x2="687.60" y2="511.0" stroke="#ef5350" stroke-width="1"/><rect x="685.30" y="496.0" width="4.6" height="8.00" fill="#ef5350"/><line x1="692.90" y1="471.0" x2="692.90" y2="505.0" stroke="#26a69a" stroke-width="1"/><rect x="690.60" y="476.0" width="4.6" height="28.00" fill="#26a69a"/><line x1="698.20" y1="474.0" x2="698.20" y2="515.6" stroke="#ef5350" stroke-width="1"/><rect x="695.90" y="475.0" width="4.6" height="35.00" fill="#ef5350"/><line x1="703.50" y1="507.5" x2="703.50" y2="528.0" stroke="#ef5350" stroke-width="1"/><rect x="701.20" y="510.0" width="4.6" height="17.00" fill="#ef5350"/><line x1="708.80" y1="525.0" x2="708.80" y2="546.0" stroke="#ef5350" stroke-width="1"/><rect x="706.50" y="527.0" width="4.6" height="16.00" fill="#ef5350"/><line x1="714.10" y1="528.0" x2="714.10" y2="544.0" stroke="#26a69a" stroke-width="1"/><rect x="711.80" y="530.0" width="4.6" height="13.00" fill="#26a69a"/><line x1="719.40" y1="528.0" x2="719.40" y2="547.0" stroke="#ef5350" stroke-width="1"/><rect x="717.10" y="530.0" width="4.6" height="16.00" fill="#ef5350"/><line x1="724.70" y1="539.0" x2="724.70" y2="548.0" stroke="#26a69a" stroke-width="1"/><rect x="722.40" y="540.0" width="4.6" height="6.00" fill="#26a69a"/><line x1="730.00" y1="523.0" x2="730.00" y2="541.0" stroke="#26a69a" stroke-width="1"/><rect x="727.70" y="524.6" width="4.6" height="15.40" fill="#26a69a"/><line x1="735.30" y1="509.0" x2="735.30" y2="525.0" stroke="#26a69a" stroke-width="1"/><rect x="733.00" y="511.0" width="4.6" height="13.60" fill="#26a69a"/><line x1="740.60" y1="509.0" x2="740.60" y2="523.0" stroke="#ef5350" stroke-width="1"/><rect x="738.30" y="511.0" width="4.6" height="11.00" fill="#ef5350"/><line x1="745.90" y1="501.0" x2="745.90" y2="523.0" stroke="#26a69a" stroke-width="1"/><rect x="743.60" y="503.0" width="4.6" height="19.00" fill="#26a69a"/><line x1="751.20" y1="501.0" x2="751.20" y2="515.0" stroke="#ef5350" stroke-width="1"/><rect x="748.90" y="503.0" width="4.6" height="2.00" fill="#ef5350"/><line x1="756.50" y1="503.0" x2="756.50" y2="513.0" stroke="#ef5350" stroke-width="1"/><rect x="754.20" y="504.5" width="4.6" height="2.50" fill="#ef5350"/><line x1="761.80" y1="497.6" x2="761.80" y2="514.0" stroke="#ef5350" stroke-width="1"/><rect x="759.50" y="507.0" width="4.6" height="5.70" fill="#ef5350"/><line x1="767.10" y1="508.0" x2="767.10" y2="514.0" stroke="#26a69a" stroke-width="1"/><rect x="764.80" y="510.0" width="4.6" height="2.70" fill="#26a69a"/><line x1="772.40" y1="508.0" x2="772.40" y2="521.4" stroke="#ef5350" stroke-width="1"/><rect x="770.10" y="510.0" width="4.6" height="7.00" fill="#ef5350"/><line x1="777.70" y1="504.5" x2="777.70" y2="518.0" stroke="#26a69a" stroke-width="1"/><rect x="775.40" y="514.0" width="4.6" height="3.00" fill="#26a69a"/><line x1="783.00" y1="509.0" x2="783.00" y2="517.0" stroke="#26a69a" stroke-width="1"/><rect x="780.70" y="513.0" width="4.6" height="3.00" fill="#26a69a"/><line x1="788.30" y1="507.6" x2="788.30" y2="514.0" stroke="#26a69a" stroke-width="1"/><rect x="786.00" y="509.5" width="4.6" height="3.50" fill="#26a69a"/><line x1="793.60" y1="495.0" x2="793.60" y2="510.0" stroke="#26a69a" stroke-width="1"/><rect x="791.30" y="497.6" width="4.6" height="11.90" fill="#26a69a"/><line x1="798.90" y1="494.0" x2="798.90" y2="522.7" stroke="#ef5350" stroke-width="1"/><rect x="796.60" y="498.0" width="4.6" height="19.70" fill="#ef5350"/><line x1="804.20" y1="508.0" x2="804.20" y2="521.0" stroke="#26a69a" stroke-width="1"/><rect x="801.90" y="514.0" width="4.6" height="3.70" fill="#26a69a"/><line x1="809.50" y1="512.7" x2="809.50" y2="526.0" stroke="#ef5350" stroke-width="1"/><rect x="807.20" y="516.0" width="4.6" height="9.00" fill="#ef5350"/><line x1="814.80" y1="519.0" x2="814.80" y2="528.0" stroke="#26a69a" stroke-width="1"/><rect x="812.50" y="520.0" width="4.6" height="5.00" fill="#26a69a"/><line x1="820.10" y1="508.0" x2="820.10" y2="522.0" stroke="#26a69a" stroke-width="1"/><rect x="817.80" y="516.0" width="4.6" height="5.00" fill="#26a69a"/><line x1="825.40" y1="507.6" x2="825.40" y2="519.0" stroke="#26a69a" stroke-width="1"/><rect x="823.10" y="510.0" width="4.6" height="6.00" fill="#26a69a"/><line x1="830.70" y1="505.0" x2="830.70" y2="519.0" stroke="#ef5350" stroke-width="1"/><rect x="828.40" y="510.0" width="4.6" height="5.00" fill="#ef5350"/><line x1="836.00" y1="511.0" x2="836.00" y2="517.7" stroke="#ef5350" stroke-width="1"/><rect x="833.70" y="514.5" width="4.6" height="1.50" fill="#ef5350"/><line x1="841.30" y1="511.0" x2="841.30" y2="517.7" stroke="#26a69a" stroke-width="1"/><rect x="839.00" y="512.0" width="4.6" height="3.00" fill="#26a69a"/><line x1="846.60" y1="511.0" x2="846.60" y2="523.5" stroke="#ef5350" stroke-width="1"/><rect x="844.30" y="512.7" width="4.6" height="10.00" fill="#ef5350"/><line x1="851.90" y1="520.0" x2="851.90" y2="534.0" stroke="#ef5350" stroke-width="1"/><rect x="849.60" y="521.4" width="4.6" height="10.60" fill="#ef5350"/><line x1="857.20" y1="529.0" x2="857.20" y2="539.0" stroke="#ef5350" stroke-width="1"/><rect x="854.90" y="531.5" width="4.6" height="2.50" fill="#ef5350"/><line x1="862.50" y1="529.0" x2="862.50" y2="540.0" stroke="#ef5350" stroke-width="1"/><rect x="860.20" y="534.0" width="4.6" height="5.60" fill="#ef5350"/><line x1="867.80" y1="529.0" x2="867.80" y2="540.6" stroke="#26a69a" stroke-width="1"/><rect x="865.50" y="535.0" width="4.6" height="4.60" fill="#26a69a"/><line x1="873.10" y1="519.0" x2="873.10" y2="536.0" stroke="#26a69a" stroke-width="1"/><rect x="870.80" y="521.0" width="4.6" height="14.00" fill="#26a69a"/><line x1="878.40" y1="520.0" x2="878.40" y2="526.0" stroke="#ef5350" stroke-width="1"/><rect x="876.10" y="521.6" width="4.6" height="3.40" fill="#ef5350"/><line x1="883.70" y1="508.0" x2="883.70" y2="525.0" stroke="#26a69a" stroke-width="1"/><rect x="881.40" y="512.0" width="4.6" height="12.00" fill="#26a69a"/><line x1="889.00" y1="504.0" x2="889.00" y2="513.0" stroke="#26a69a" stroke-width="1"/><rect x="886.70" y="511.0" width="4.6" height="1.00" fill="#26a69a"/><line x1="894.30" y1="504.0" x2="894.30" y2="513.0" stroke="#26a69a" stroke-width="1"/><rect x="892.00" y="508.0" width="4.6" height="4.00" fill="#26a69a"/><line x1="899.60" y1="498.6" x2="899.60" y2="510.0" stroke="#26a69a" stroke-width="1"/><rect x="897.30" y="501.0" width="4.6" height="8.00" fill="#26a69a"/><line x1="904.90" y1="480.0" x2="904.90" y2="502.0" stroke="#26a69a" stroke-width="1"/><rect x="902.60" y="483.7" width="4.6" height="17.30" fill="#26a69a"/><line x1="910.20" y1="479.0" x2="910.20" y2="495.0" stroke="#ef5350" stroke-width="1"/><rect x="907.90" y="483.7" width="4.6" height="8.00" fill="#ef5350"/><line x1="915.50" y1="475.6" x2="915.50" y2="493.0" stroke="#26a69a" stroke-width="1"/><rect x="913.20" y="479.0" width="4.6" height="12.70" fill="#26a69a"/><line x1="920.80" y1="468.7" x2="920.80" y2="480.0" stroke="#26a69a" stroke-width="1"/><rect x="918.50" y="471.0" width="4.6" height="8.00" fill="#26a69a"/><line x1="926.10" y1="434.0" x2="926.10" y2="473.0" stroke="#26a69a" stroke-width="1"/><rect x="923.80" y="444.6" width="4.6" height="27.40" fill="#26a69a"/><line x1="931.40" y1="401.0" x2="931.40" y2="446.0" stroke="#26a69a" stroke-width="1"/><rect x="929.10" y="402.0" width="4.6" height="43.70" fill="#26a69a"/><line x1="936.70" y1="387.0" x2="936.70" y2="413.6" stroke="#26a69a" stroke-width="1"/><rect x="934.40" y="401.0" width="4.6" height="1.00" fill="#26a69a"/><line x1="942.00" y1="393.0" x2="942.00" y2="406.7" stroke="#ef5350" stroke-width="1"/><rect x="939.70" y="400.5" width="4.6" height="1.00" fill="#ef5350"/><line x1="947.30" y1="374.5" x2="947.30" y2="402.0" stroke="#26a69a" stroke-width="1"/><rect x="945.00" y="386.0" width="4.6" height="15.00" fill="#26a69a"/><line x1="952.60" y1="376.8" x2="952.60" y2="393.0" stroke="#26a69a" stroke-width="1"/><rect x="950.30" y="379.0" width="4.6" height="7.00" fill="#26a69a"/><line x1="957.90" y1="352.0" x2="957.90" y2="380.0" stroke="#26a69a" stroke-width="1"/><rect x="955.60" y="353.8" width="4.6" height="25.20" fill="#26a69a"/><line x1="963.20" y1="348.0" x2="963.20" y2="398.6" stroke="#ef5350" stroke-width="1"/><rect x="960.90" y="353.8" width="4.6" height="40.20" fill="#ef5350"/><line x1="968.50" y1="382.0" x2="968.50" y2="402.0" stroke="#26a69a" stroke-width="1"/><rect x="966.20" y="383.7" width="4.6" height="10.30" fill="#26a69a"/><line x1="973.80" y1="378.0" x2="973.80" y2="395.0" stroke="#ef5350" stroke-width="1"/><rect x="971.50" y="383.7" width="4.6" height="10.30" fill="#ef5350"/><line x1="979.10" y1="386.0" x2="979.10" y2="394.0" stroke="#26a69a" stroke-width="1"/><rect x="976.80" y="388.0" width="4.6" height="5.00" fill="#26a69a"/><line x1="984.40" y1="387.0" x2="984.40" y2="406.7" stroke="#ef5350" stroke-width="1"/><rect x="982.10" y="388.0" width="4.6" height="8.00" fill="#ef5350"/><line x1="989.70" y1="395.0" x2="989.70" y2="419.0" stroke="#ef5350" stroke-width="1"/><rect x="987.40" y="396.0" width="4.6" height="22.00" fill="#ef5350"/><line x1="995.00" y1="404.0" x2="995.00" y2="420.5" stroke="#26a69a" stroke-width="1"/><rect x="992.70" y="414.0" width="4.6" height="4.00" fill="#26a69a"/><line x1="1000.30" y1="413.0" x2="1000.30" y2="432.0" stroke="#ef5350" stroke-width="1"/><rect x="998.00" y="414.0" width="4.6" height="17.00" fill="#ef5350"/><line x1="1005.60" y1="428.0" x2="1005.60" y2="442.0" stroke="#ef5350" stroke-width="1"/><rect x="1003.30" y="429.7" width="4.6" height="11.30" fill="#ef5350"/><line x1="1010.90" y1="414.7" x2="1010.90" y2="448.0" stroke="#26a69a" stroke-width="1"/><rect x="1008.60" y="434.0" width="4.6" height="7.00" fill="#26a69a"/><line x1="1016.20" y1="423.0" x2="1016.20" y2="435.0" stroke="#26a69a" stroke-width="1"/><rect x="1013.90" y="425.0" width="4.6" height="9.00" fill="#26a69a"/><line x1="1021.50" y1="416.0" x2="1021.50" y2="426.0" stroke="#26a69a" stroke-width="1"/><rect x="1019.20" y="418.0" width="4.6" height="7.00" fill="#26a69a"/><line x1="1026.80" y1="417.0" x2="1026.80" y2="429.7" stroke="#ef5350" stroke-width="1"/><rect x="1024.50" y="418.0" width="4.6" height="7.00" fill="#ef5350"/><line x1="1032.10" y1="394.0" x2="1032.10" y2="427.0" stroke="#26a69a" stroke-width="1"/><rect x="1029.80" y="403.6" width="4.6" height="21.90" fill="#26a69a"/><line x1="1037.40" y1="389.0" x2="1037.40" y2="412.0" stroke="#26a69a" stroke-width="1"/><rect x="1035.10" y="401.0" width="4.6" height="2.60" fill="#26a69a"/><line x1="1042.70" y1="394.0" x2="1042.70" y2="407.0" stroke="#ef5350" stroke-width="1"/><rect x="1040.40" y="401.5" width="4.6" height="2.00" fill="#ef5350"/><line x1="1048.00" y1="402.0" x2="1048.00" y2="415.0" stroke="#ef5350" stroke-width="1"/><rect x="1045.70" y="403.0" width="4.6" height="1.50" fill="#ef5350"/><line x1="1053.30" y1="396.0" x2="1053.30" y2="406.0" stroke="#26a69a" stroke-width="1"/><rect x="1051.00" y="398.0" width="4.6" height="7.00" fill="#26a69a"/><line x1="1058.60" y1="396.0" x2="1058.60" y2="403.6" stroke="#26a69a" stroke-width="1"/><rect x="1056.30" y="397.7" width="4.6" height="1.30" fill="#26a69a"/><line x1="1063.90" y1="375.8" x2="1063.90" y2="399.0" stroke="#26a69a" stroke-width="1"/><rect x="1061.60" y="378.0" width="4.6" height="20.50" fill="#26a69a"/><line x1="1069.20" y1="372.0" x2="1069.20" y2="381.0" stroke="#26a69a" stroke-width="1"/><rect x="1066.90" y="374.0" width="4.6" height="4.70" fill="#26a69a"/><line x1="1074.50" y1="372.0" x2="1074.50" y2="385.0" stroke="#ef5350" stroke-width="1"/><rect x="1072.20" y="374.0" width="4.6" height="10.00" fill="#ef5350"/><line x1="1079.80" y1="381.6" x2="1079.80" y2="386.0" stroke="#ef5350" stroke-width="1"/><rect x="1077.50" y="383.0" width="4.6" height="2.00" fill="#ef5350"/><line x1="1085.10" y1="374.0" x2="1085.10" y2="387.5" stroke="#ef5350" stroke-width="1"/><rect x="1082.80" y="385.0" width="4.6" height="1.80" fill="#ef5350"/><line x1="1090.40" y1="383.0" x2="1090.40" y2="397.7" stroke="#ef5350" stroke-width="1"/><rect x="1088.10" y="385.0" width="4.6" height="12.00" fill="#ef5350"/><line x1="1095.70" y1="394.8" x2="1095.70" y2="400.0" stroke="#ef5350" stroke-width="1"/><rect x="1093.40" y="396.0" width="4.6" height="2.50" fill="#ef5350"/><line x1="1101.00" y1="389.0" x2="1101.00" y2="399.0" stroke="#26a69a" stroke-width="1"/><rect x="1098.70" y="393.0" width="4.6" height="5.50" fill="#26a69a"/><line x1="1106.30" y1="378.7" x2="1106.30" y2="394.0" stroke="#26a69a" stroke-width="1"/><rect x="1104.00" y="383.0" width="4.6" height="10.00" fill="#26a69a"/><line x1="1111.60" y1="375.0" x2="1111.60" y2="384.0" stroke="#26a69a" stroke-width="1"/><rect x="1109.30" y="377.0" width="4.6" height="6.00" fill="#26a69a"/><line x1="1116.90" y1="360.4" x2="1116.90" y2="379.4" stroke="#26a69a" stroke-width="1"/><rect x="1114.60" y="372.0" width="4.6" height="5.00" fill="#26a69a"/><line x1="1122.20" y1="360.4" x2="1122.20" y2="377.0" stroke="#26a69a" stroke-width="1"/><rect x="1119.90" y="371.4" width="4.6" height="1.00" fill="#26a69a"/><line x1="1127.50" y1="356.8" x2="1127.50" y2="374.3" stroke="#26a69a" stroke-width="1"/><rect x="1125.20" y="359.0" width="4.6" height="12.00" fill="#26a69a"/><line x1="1132.80" y1="332.0" x2="1132.80" y2="360.0" stroke="#26a69a" stroke-width="1"/><rect x="1130.50" y="354.0" width="4.6" height="5.00" fill="#26a69a"/><line x1="1138.10" y1="353.0" x2="1138.10" y2="376.5" stroke="#ef5350" stroke-width="1"/><rect x="1135.80" y="354.0" width="4.6" height="17.00" fill="#ef5350"/><line x1="1143.40" y1="370.0" x2="1143.40" y2="382.4" stroke="#ef5350" stroke-width="1"/><rect x="1141.10" y="371.0" width="4.6" height="5.00" fill="#ef5350"/><line x1="1148.70" y1="371.0" x2="1148.70" y2="393.5" stroke="#ef5350" stroke-width="1"/><rect x="1146.40" y="373.0" width="4.6" height="19.60" fill="#ef5350"/><line x1="1154.00" y1="389.0" x2="1154.00" y2="396.5" stroke="#ef5350" stroke-width="1"/><rect x="1151.70" y="392.6" width="4.6" height="2.90" fill="#ef5350"/><line x1="1159.30" y1="385.0" x2="1159.30" y2="397.0" stroke="#26a69a" stroke-width="1"/><rect x="1157.00" y="386.0" width="4.6" height="9.50" fill="#26a69a"/><line x1="1164.60" y1="384.0" x2="1164.60" y2="394.8" stroke="#ef5350" stroke-width="1"/><rect x="1162.30" y="386.0" width="4.6" height="4.00" fill="#ef5350"/><line x1="1169.90" y1="383.0" x2="1169.90" y2="393.0" stroke="#ef5350" stroke-width="1"/><rect x="1167.60" y="389.7" width="4.6" height="2.30" fill="#ef5350"/><line x1="1175.20" y1="380.0" x2="1175.20" y2="396.0" stroke="#26a69a" stroke-width="1"/><rect x="1172.90" y="381.6" width="4.6" height="10.40" fill="#26a69a"/><line x1="1180.50" y1="377.0" x2="1180.50" y2="389.0" stroke="#ef5350" stroke-width="1"/><rect x="1178.20" y="381.6" width="4.6" height="3.00" fill="#ef5350"/><line x1="1185.80" y1="383.5" x2="1185.80" y2="397.0" stroke="#ef5350" stroke-width="1"/><rect x="1183.50" y="384.6" width="4.6" height="11.40" fill="#ef5350"/><line x1="1191.10" y1="392.0" x2="1191.10" y2="400.0" stroke="#26a69a" stroke-width="1"/><rect x="1188.80" y="395.5" width="4.6" height="1.00" fill="#26a69a"/><line x1="1196.40" y1="390.0" x2="1196.40" y2="398.0" stroke="#26a69a" stroke-width="1"/><rect x="1194.10" y="392.0" width="4.6" height="4.60" fill="#26a69a"/><line x1="1201.70" y1="380.0" x2="1201.70" y2="394.0" stroke="#26a69a" stroke-width="1"/><rect x="1199.40" y="381.0" width="4.6" height="11.00" fill="#26a69a"/><line x1="1207.00" y1="371.5" x2="1207.00" y2="382.0" stroke="#26a69a" stroke-width="1"/><rect x="1204.70" y="378.6" width="4.6" height="2.40" fill="#26a69a"/><line x1="1212.30" y1="360.0" x2="1212.30" y2="380.0" stroke="#26a69a" stroke-width="1"/><rect x="1210.00" y="362.0" width="4.6" height="16.60" fill="#26a69a"/><line x1="1217.60" y1="352.0" x2="1217.60" y2="364.0" stroke="#ef5350" stroke-width="1"/><rect x="1215.30" y="362.0" width="4.6" height="1.70" fill="#ef5350"/><line x1="1222.90" y1="357.4" x2="1222.90" y2="366.8" stroke="#26a69a" stroke-width="1"/><rect x="1220.60" y="362.0" width="4.6" height="1.70" fill="#26a69a"/><line x1="1228.20" y1="361.0" x2="1228.20" y2="387.0" stroke="#ef5350" stroke-width="1"/><rect x="1225.90" y="362.0" width="4.6" height="23.00" fill="#ef5350"/><line x1="1233.50" y1="384.0" x2="1233.50" y2="392.7" stroke="#ef5350" stroke-width="1"/><rect x="1231.20" y="385.0" width="4.6" height="5.00" fill="#ef5350"/><line x1="1238.80" y1="386.4" x2="1238.80" y2="392.0" stroke="#ef5350" stroke-width="1"/><rect x="1236.50" y="389.5" width="4.6" height="1.50" fill="#ef5350"/><line x1="1244.10" y1="380.0" x2="1244.10" y2="394.0" stroke="#26a69a" stroke-width="1"/><rect x="1241.80" y="381.0" width="4.6" height="9.00" fill="#26a69a"/><line x1="1249.40" y1="353.5" x2="1249.40" y2="382.0" stroke="#26a69a" stroke-width="1"/><rect x="1247.10" y="359.0" width="4.6" height="22.00" fill="#26a69a"/><line x1="1254.70" y1="301.0" x2="1254.70" y2="360.0" stroke="#26a69a" stroke-width="1"/><rect x="1252.40" y="304.0" width="4.6" height="55.00" fill="#26a69a"/><line x1="1260.00" y1="303.0" x2="1260.00" y2="364.5" stroke="#ef5350" stroke-width="1"/><rect x="1257.70" y="304.0" width="4.6" height="56.50" fill="#ef5350"/><line x1="1265.30" y1="344.0" x2="1265.30" y2="362.0" stroke="#26a69a" stroke-width="1"/><rect x="1263.00" y="351.0" width="4.6" height="10.00" fill="#26a69a"/><line x1="1270.60" y1="350.0" x2="1270.60" y2="375.0" stroke="#ef5350" stroke-width="1"/><rect x="1268.30" y="351.0" width="4.6" height="22.00" fill="#ef5350"/><line x1="1275.90" y1="372.0" x2="1275.90" y2="384.0" stroke="#ef5350" stroke-width="1"/><rect x="1273.60" y="373.0" width="4.6" height="7.00" fill="#ef5350"/><line x1="1281.20" y1="379.0" x2="1281.20" y2="396.6" stroke="#ef5350" stroke-width="1"/><rect x="1278.90" y="380.0" width="4.6" height="12.70" fill="#ef5350"/><line x1="1286.50" y1="381.0" x2="1286.50" y2="393.5" stroke="#26a69a" stroke-width="1"/><rect x="1284.20" y="388.7" width="4.6" height="4.00" fill="#26a69a"/><line x1="1291.80" y1="384.0" x2="1291.80" y2="404.5" stroke="#ef5350" stroke-width="1"/><rect x="1289.50" y="388.7" width="4.6" height="14.90" fill="#ef5350"/><line x1="1297.10" y1="399.7" x2="1297.10" y2="426.0" stroke="#ef5350" stroke-width="1"/><rect x="1294.80" y="403.0" width="4.6" height="3.80" fill="#ef5350"/><line x1="1302.40" y1="405.0" x2="1302.40" y2="411.5" stroke="#ef5350" stroke-width="1"/><rect x="1300.10" y="406.8" width="4.6" height="2.20" fill="#ef5350"/><line x1="1307.70" y1="398.0" x2="1307.70" y2="410.0" stroke="#26a69a" stroke-width="1"/><rect x="1305.40" y="399.0" width="4.6" height="10.00" fill="#26a69a"/><line x1="1313.00" y1="388.0" x2="1313.00" y2="400.0" stroke="#26a69a" stroke-width="1"/><rect x="1310.70" y="396.6" width="4.6" height="2.40" fill="#26a69a"/><line x1="1318.30" y1="395.0" x2="1318.30" y2="407.5" stroke="#ef5350" stroke-width="1"/><rect x="1316.00" y="396.6" width="4.6" height="10.20" fill="#ef5350"/><line x1="1323.60" y1="398.0" x2="1323.60" y2="414.5" stroke="#ef5350" stroke-width="1"/><rect x="1321.30" y="406.8" width="4.6" height="7.00" fill="#ef5350"/><line x1="1328.90" y1="412.8" x2="1328.90" y2="427.0" stroke="#ef5350" stroke-width="1"/><rect x="1326.60" y="413.8" width="4.6" height="1.60" fill="#ef5350"/><line x1="1334.20" y1="407.5" x2="1334.20" y2="416.0" stroke="#26a69a" stroke-width="1"/><rect x="1331.90" y="413.0" width="4.6" height="2.40" fill="#26a69a"/><line x1="1339.50" y1="408.0" x2="1339.50" y2="415.4" stroke="#26a69a" stroke-width="1"/><rect x="1337.20" y="409.0" width="4.6" height="4.00" fill="#26a69a"/><line x1="1344.80" y1="402.8" x2="1344.80" y2="414.5" stroke="#ef5350" stroke-width="1"/><rect x="1342.50" y="409.0" width="4.6" height="4.80" fill="#ef5350"/><line x1="1350.10" y1="408.0" x2="1350.10" y2="414.0" stroke="#26a69a" stroke-width="1"/><rect x="1347.80" y="409.0" width="4.6" height="4.30" fill="#26a69a"/><line x1="1355.40" y1="407.5" x2="1355.40" y2="409.6" stroke="#26a69a" stroke-width="1"/><rect x="1353.10" y="408.0" width="4.6" height="1.00" fill="#26a69a"/><line x1="1360.70" y1="394.3" x2="1360.70" y2="409.6" stroke="#26a69a" stroke-width="1"/><rect x="1358.40" y="398.7" width="4.6" height="9.30" fill="#26a69a"/><line x1="1366.00" y1="397.5" x2="1366.00" y2="404.0" stroke="#ef5350" stroke-width="1"/><rect x="1363.70" y="398.7" width="4.6" height="4.30" fill="#ef5350"/><line x1="1371.30" y1="401.0" x2="1371.30" y2="404.0" stroke="#26a69a" stroke-width="1"/><rect x="1369.00" y="402.0" width="4.6" height="1.00" fill="#26a69a"/><line x1="1376.60" y1="391.4" x2="1376.60" y2="403.0" stroke="#26a69a" stroke-width="1"/><rect x="1374.30" y="396.5" width="4.6" height="5.50" fill="#26a69a"/><line x1="1381.90" y1="386.0" x2="1381.90" y2="397.5" stroke="#26a69a" stroke-width="1"/><rect x="1379.60" y="392.0" width="4.6" height="4.50" fill="#26a69a"/><line x1="1387.20" y1="391.0" x2="1387.20" y2="404.0" stroke="#ef5350" stroke-width="1"/><rect x="1384.90" y="392.0" width="4.6" height="11.00" fill="#ef5350"/><line x1="1392.50" y1="402.0" x2="1392.50" y2="412.6" stroke="#ef5350" stroke-width="1"/><rect x="1390.20" y="403.0" width="4.6" height="2.00" fill="#ef5350"/><line x1="1397.80" y1="401.0" x2="1397.80" y2="411.0" stroke="#26a69a" stroke-width="1"/><rect x="1395.50" y="404.5" width="4.6" height="1.00" fill="#26a69a"/><line x1="1403.10" y1="404.0" x2="1403.10" y2="412.0" stroke="#ef5350" stroke-width="1"/><rect x="1400.80" y="405.0" width="4.6" height="6.00" fill="#ef5350"/><line x1="1408.40" y1="403.0" x2="1408.40" y2="412.0" stroke="#26a69a" stroke-width="1"/><rect x="1406.10" y="410.5" width="4.6" height="1.00" fill="#26a69a"/><line x1="1413.70" y1="405.0" x2="1413.70" y2="412.6" stroke="#26a69a" stroke-width="1"/><rect x="1411.40" y="406.0" width="4.6" height="5.00" fill="#26a69a"/><line x1="1419.00" y1="392.0" x2="1419.00" y2="409.6" stroke="#26a69a" stroke-width="1"/><rect x="1416.70" y="394.0" width="4.6" height="12.00" fill="#26a69a"/><line x1="1424.30" y1="389.0" x2="1424.30" y2="403.0" stroke="#ef5350" stroke-width="1"/><rect x="1422.00" y="394.0" width="4.6" height="8.00" fill="#ef5350"/><line x1="1429.60" y1="399.4" x2="1429.60" y2="404.0" stroke="#ef5350" stroke-width="1"/><rect x="1427.30" y="401.6" width="4.6" height="1.40" fill="#ef5350"/><line x1="1434.90" y1="397.0" x2="1434.90" y2="406.0" stroke="#ef5350" stroke-width="1"/><rect x="1432.60" y="402.0" width="4.6" height="3.00" fill="#ef5350"/><line x1="1440.20" y1="404.0" x2="1440.20" y2="410.0" stroke="#ef5350" stroke-width="1"/><rect x="1437.90" y="405.0" width="4.6" height="4.00" fill="#ef5350"/><line x1="1445.50" y1="403.0" x2="1445.50" y2="410.0" stroke="#26a69a" stroke-width="1"/><rect x="1443.20" y="404.5" width="4.6" height="4.50" fill="#26a69a"/><line x1="1450.80" y1="395.0" x2="1450.80" y2="408.0" stroke="#26a69a" stroke-width="1"/><rect x="1448.50" y="396.0" width="4.6" height="8.50" fill="#26a69a"/><line x1="1456.10" y1="395.0" x2="1456.10" y2="404.5" stroke="#ef5350" stroke-width="1"/><rect x="1453.80" y="396.0" width="4.6" height="1.50" fill="#ef5350"/><line x1="1461.40" y1="386.0" x2="1461.40" y2="398.0" stroke="#26a69a" stroke-width="1"/><rect x="1459.10" y="388.0" width="4.6" height="9.00" fill="#26a69a"/><line x1="1466.70" y1="350.0" x2="1466.70" y2="390.0" stroke="#26a69a" stroke-width="1"/><rect x="1464.40" y="374.6" width="4.6" height="14.40" fill="#26a69a"/><line x1="1472.00" y1="368.7" x2="1472.00" y2="384.0" stroke="#26a69a" stroke-width="1"/><rect x="1469.70" y="372.0" width="4.6" height="2.60" fill="#26a69a"/><line x1="1477.30" y1="354.8" x2="1477.30" y2="374.6" stroke="#26a69a" stroke-width="1"/><rect x="1475.00" y="365.0" width="4.6" height="7.00" fill="#26a69a"/><line x1="1482.60" y1="360.7" x2="1482.60" y2="375.0" stroke="#ef5350" stroke-width="1"/><rect x="1480.30" y="365.0" width="4.6" height="9.00" fill="#ef5350"/><line x1="1487.90" y1="366.0" x2="1487.90" y2="376.0" stroke="#26a69a" stroke-width="1"/><rect x="1485.60" y="367.0" width="4.6" height="7.00" fill="#26a69a"/><line x1="1493.20" y1="342.4" x2="1493.20" y2="368.0" stroke="#26a69a" stroke-width="1"/><rect x="1490.90" y="351.0" width="4.6" height="16.00" fill="#26a69a"/><line x1="1498.50" y1="350.0" x2="1498.50" y2="367.5" stroke="#ef5350" stroke-width="1"/><rect x="1496.20" y="351.0" width="4.6" height="15.50" fill="#ef5350"/><line x1="1503.80" y1="360.0" x2="1503.80" y2="373.0" stroke="#ef5350" stroke-width="1"/><rect x="1501.50" y="366.0" width="4.6" height="3.50" fill="#ef5350"/><line x1="1509.10" y1="362.0" x2="1509.10" y2="371.0" stroke="#26a69a" stroke-width="1"/><rect x="1506.80" y="365.0" width="4.6" height="4.60" fill="#26a69a"/><line x1="1514.40" y1="356.0" x2="1514.40" y2="367.0" stroke="#26a69a" stroke-width="1"/><rect x="1512.10" y="357.0" width="4.6" height="8.80" fill="#26a69a"/><line x1="1519.70" y1="350.8" x2="1519.70" y2="359.0" stroke="#26a69a" stroke-width="1"/><rect x="1517.40" y="354.5" width="4.6" height="3.20" fill="#26a69a"/><line x1="1525.00" y1="339.0" x2="1525.00" y2="355.5" stroke="#26a69a" stroke-width="1"/><rect x="1522.70" y="340.0" width="4.6" height="14.50" fill="#26a69a"/><line x1="1530.30" y1="337.0" x2="1530.30" y2="356.0" stroke="#ef5350" stroke-width="1"/><rect x="1528.00" y="340.0" width="4.6" height="15.00" fill="#ef5350"/><line x1="1535.60" y1="339.0" x2="1535.60" y2="356.0" stroke="#26a69a" stroke-width="1"/><rect x="1533.30" y="343.0" width="4.6" height="12.00" fill="#26a69a"/><line x1="1540.90" y1="318.0" x2="1540.90" y2="344.0" stroke="#26a69a" stroke-width="1"/><rect x="1538.60" y="325.7" width="4.6" height="17.30" fill="#26a69a"/><line x1="1546.20" y1="325.0" x2="1546.20" y2="342.0" stroke="#ef5350" stroke-width="1"/><rect x="1543.90" y="325.7" width="4.6" height="15.30" fill="#ef5350"/><line x1="1551.50" y1="339.0" x2="1551.50" y2="358.0" stroke="#ef5350" stroke-width="1"/><rect x="1549.20" y="340.7" width="4.6" height="16.30" fill="#ef5350"/><line x1="1556.80" y1="354.5" x2="1556.80" y2="360.0" stroke="#26a69a" stroke-width="1"/><rect x="1554.50" y="356.0" width="4.6" height="1.00" fill="#26a69a"/><line x1="1562.10" y1="351.0" x2="1562.10" y2="361.4" stroke="#26a69a" stroke-width="1"/><rect x="1559.80" y="352.7" width="4.6" height="4.30" fill="#26a69a"/><line x1="1567.40" y1="346.4" x2="1567.40" y2="354.0" stroke="#26a69a" stroke-width="1"/><rect x="1565.10" y="352.0" width="4.6" height="1.30" fill="#26a69a"/><line x1="1572.70" y1="344.0" x2="1572.70" y2="352.0" stroke="#26a69a" stroke-width="1"/><rect x="1570.40" y="350.0" width="4.6" height="1.40" fill="#26a69a"/><line x1="1578.00" y1="347.0" x2="1578.00" y2="364.0" stroke="#ef5350" stroke-width="1"/><rect x="1575.70" y="349.5" width="4.6" height="10.10" fill="#ef5350"/><line x1="1583.30" y1="358.0" x2="1583.30" y2="370.0" stroke="#ef5350" stroke-width="1"/><rect x="1581.00" y="359.0" width="4.6" height="10.00" fill="#ef5350"/><line x1="1588.60" y1="367.0" x2="1588.60" y2="375.0" stroke="#ef5350" stroke-width="1"/><rect x="1586.30" y="368.0" width="4.6" height="2.00" fill="#ef5350"/><line x1="1593.90" y1="365.0" x2="1593.90" y2="371.0" stroke="#26a69a" stroke-width="1"/><rect x="1591.60" y="365.8" width="4.6" height="4.20" fill="#26a69a"/><line x1="1599.20" y1="365.0" x2="1599.20" y2="376.0" stroke="#ef5350" stroke-width="1"/><rect x="1596.90" y="365.8" width="4.6" height="9.20" fill="#ef5350"/><line x1="1604.50" y1="371.5" x2="1604.50" y2="383.4" stroke="#ef5350" stroke-width="1"/><rect x="1602.20" y="374.6" width="4.6" height="1.00" fill="#ef5350"/><line x1="1609.80" y1="371.5" x2="1609.80" y2="377.7" stroke="#26a69a" stroke-width="1"/><rect x="1607.50" y="374.6" width="4.6" height="1.00" fill="#26a69a"/><line x1="1615.10" y1="372.0" x2="1615.10" y2="383.4" stroke="#ef5350" stroke-width="1"/><rect x="1612.80" y="376.5" width="4.6" height="5.00" fill="#ef5350"/><line x1="1620.40" y1="380.0" x2="1620.40" y2="389.7" stroke="#ef5350" stroke-width="1"/><rect x="1618.10" y="381.5" width="4.6" height="2.50" fill="#ef5350"/><line x1="1625.70" y1="375.5" x2="1625.70" y2="387.0" stroke="#26a69a" stroke-width="1"/><rect x="1623.40" y="376.5" width="4.6" height="8.10" fill="#26a69a"/><line x1="1631.00" y1="375.5" x2="1631.00" y2="382.0" stroke="#ef5350" stroke-width="1"/><rect x="1628.70" y="376.5" width="4.6" height="4.50" fill="#ef5350"/><line x1="1636.30" y1="366.0" x2="1636.30" y2="382.0" stroke="#26a69a" stroke-width="1"/><rect x="1634.00" y="367.0" width="4.6" height="14.00" fill="#26a69a"/><line x1="1641.60" y1="360.0" x2="1641.60" y2="371.5" stroke="#26a69a" stroke-width="1"/><rect x="1639.30" y="367.0" width="4.6" height="1.00" fill="#26a69a"/><line x1="1646.90" y1="356.4" x2="1646.90" y2="368.6" stroke="#26a69a" stroke-width="1"/><rect x="1644.60" y="362.0" width="4.6" height="5.70" fill="#26a69a"/><line x1="1652.20" y1="361.0" x2="1652.20" y2="367.7" stroke="#ef5350" stroke-width="1"/><rect x="1649.90" y="362.0" width="4.6" height="2.00" fill="#ef5350"/><line x1="1657.50" y1="363.5" x2="1657.50" y2="371.0" stroke="#ef5350" stroke-width="1"/><rect x="1655.20" y="364.6" width="4.6" height="5.40" fill="#ef5350"/><line x1="1662.80" y1="369.0" x2="1662.80" y2="378.7" stroke="#ef5350" stroke-width="1"/><rect x="1660.50" y="370.0" width="4.6" height="6.00" fill="#ef5350"/><line x1="1668.10" y1="372.6" x2="1668.10" y2="379.6" stroke="#26a69a" stroke-width="1"/><rect x="1665.80" y="375.5" width="4.6" height="1.00" fill="#26a69a"/><line x1="1673.40" y1="371.0" x2="1673.40" y2="380.0" stroke="#26a69a" stroke-width="1"/><rect x="1671.10" y="372.0" width="4.6" height="4.00" fill="#26a69a"/><line x1="1678.70" y1="365.0" x2="1678.70" y2="373.0" stroke="#26a69a" stroke-width="1"/><rect x="1676.40" y="366.0" width="4.6" height="6.00" fill="#26a69a"/><line x1="1684.00" y1="366.0" x2="1684.00" y2="368.8" stroke="#26a69a" stroke-width="1"/><rect x="1681.70" y="366.4" width="4.6" height="1.00" fill="#26a69a"/><line x1="1689.30" y1="357.5" x2="1689.30" y2="368.0" stroke="#26a69a" stroke-width="1"/><rect x="1687.00" y="360.0" width="4.6" height="7.00" fill="#26a69a"/><line x1="1694.60" y1="359.0" x2="1694.60" y2="379.0" stroke="#ef5350" stroke-width="1"/><rect x="1692.30" y="360.0" width="4.6" height="15.00" fill="#ef5350"/><line x1="1699.90" y1="373.0" x2="1699.90" y2="381.5" stroke="#ef5350" stroke-width="1"/><rect x="1697.60" y="374.0" width="4.6" height="1.00" fill="#ef5350"/><line x1="1705.20" y1="370.0" x2="1705.20" y2="376.0" stroke="#26a69a" stroke-width="1"/><rect x="1702.90" y="370.7" width="4.6" height="4.30" fill="#26a69a"/><line x1="1710.50" y1="364.0" x2="1710.50" y2="372.6" stroke="#26a69a" stroke-width="1"/><rect x="1708.20" y="365.0" width="4.6" height="6.60" fill="#26a69a"/><line x1="1715.80" y1="352.8" x2="1715.80" y2="367.4" stroke="#26a69a" stroke-width="1"/><rect x="1713.50" y="354.0" width="4.6" height="11.50" fill="#26a69a"/><line x1="1721.10" y1="345.3" x2="1721.10" y2="360.0" stroke="#26a69a" stroke-width="1"/><rect x="1718.80" y="345.7" width="4.6" height="9.30" fill="#26a69a"/><line x1="1726.40" y1="345.0" x2="1726.40" y2="358.0" stroke="#ef5350" stroke-width="1"/><rect x="1724.10" y="345.7" width="4.6" height="11.30" fill="#ef5350"/><line x1="1731.70" y1="351.4" x2="1731.70" y2="358.0" stroke="#26a69a" stroke-width="1"/><rect x="1729.40" y="352.0" width="4.6" height="5.00" fill="#26a69a"/><line x1="1737.00" y1="341.0" x2="1737.00" y2="354.0" stroke="#26a69a" stroke-width="1"/><rect x="1734.70" y="345.0" width="4.6" height="8.00" fill="#26a69a"/><line x1="1742.30" y1="339.0" x2="1742.30" y2="351.4" stroke="#26a69a" stroke-width="1"/><rect x="1740.00" y="342.0" width="4.6" height="3.00" fill="#26a69a"/><line x1="1747.60" y1="340.0" x2="1747.60" y2="347.6" stroke="#26a69a" stroke-width="1"/><rect x="1745.30" y="341.5" width="4.6" height="1.00" fill="#26a69a"/><line x1="1752.90" y1="337.8" x2="1752.90" y2="347.6" stroke="#ef5350" stroke-width="1"/><rect x="1750.60" y="341.5" width="4.6" height="3.50" fill="#ef5350"/><line x1="1758.20" y1="336.3" x2="1758.20" y2="346.0" stroke="#26a69a" stroke-width="1"/><rect x="1755.90" y="339.0" width="4.6" height="6.00" fill="#26a69a"/><line x1="1763.50" y1="339.5" x2="1763.50" y2="343.0" stroke="#ef5350" stroke-width="1"/><rect x="1761.20" y="340.0" width="4.6" height="1.00" fill="#ef5350"/><line x1="1768.80" y1="340.0" x2="1768.80" y2="353.3" stroke="#ef5350" stroke-width="1"/><rect x="1766.50" y="341.0" width="4.6" height="10.40" fill="#ef5350"/><line x1="1774.10" y1="351.0" x2="1774.10" y2="356.6" stroke="#ef5350" stroke-width="1"/><rect x="1771.80" y="351.4" width="4.6" height="1.00" fill="#ef5350"/><line x1="1779.40" y1="351.0" x2="1779.40" y2="366.5" stroke="#ef5350" stroke-width="1"/><rect x="1777.10" y="352.0" width="4.6" height="13.50" fill="#ef5350"/><line x1="1784.70" y1="356.6" x2="1784.70" y2="366.5" stroke="#26a69a" stroke-width="1"/><rect x="1782.40" y="360.0" width="4.6" height="5.50" fill="#26a69a"/><line x1="1790.00" y1="354.0" x2="1790.00" y2="362.0" stroke="#26a69a" stroke-width="1"/><rect x="1787.70" y="355.0" width="4.6" height="6.00" fill="#26a69a"/><line x1="1795.30" y1="349.5" x2="1795.30" y2="356.0" stroke="#26a69a" stroke-width="1"/><rect x="1793.00" y="350.5" width="4.6" height="4.50" fill="#26a69a"/><line x1="1800.60" y1="349.5" x2="1800.60" y2="359.0" stroke="#ef5350" stroke-width="1"/><rect x="1798.30" y="350.5" width="4.6" height="5.50" fill="#ef5350"/><line x1="1805.90" y1="346.2" x2="1805.90" y2="357.5" stroke="#26a69a" stroke-width="1"/><rect x="1803.60" y="350.5" width="4.6" height="6.10" fill="#26a69a"/><line x1="1811.20" y1="349.0" x2="1811.20" y2="352.0" stroke="#26a69a" stroke-width="1"/><rect x="1808.90" y="350.0" width="4.6" height="1.00" fill="#26a69a"/><line x1="1816.50" y1="350.0" x2="1816.50" y2="355.0" stroke="#ef5350" stroke-width="1"/><rect x="1814.20" y="350.5" width="4.6" height="2.50" fill="#ef5350"/><line x1="1821.80" y1="351.5" x2="1821.80" y2="354.0" stroke="#26a69a" stroke-width="1"/><rect x="1819.50" y="352.0" width="4.6" height="1.00" fill="#26a69a"/><line x1="1827.10" y1="326.8" x2="1827.10" y2="353.5" stroke="#26a69a" stroke-width="1"/><rect x="1824.80" y="330.8" width="4.6" height="21.80" fill="#26a69a"/><line x1="1832.40" y1="316.0" x2="1832.40" y2="332.5" stroke="#26a69a" stroke-width="1"/><rect x="1830.10" y="325.8" width="4.6" height="6.00" fill="#26a69a"/><line x1="1837.70" y1="312.0" x2="1837.70" y2="327.5" stroke="#26a69a" stroke-width="1"/><rect x="1835.40" y="316.0" width="4.6" height="10.80" fill="#26a69a"/><line x1="1843.00" y1="269.0" x2="1843.00" y2="318.0" stroke="#26a69a" stroke-width="1"/><rect x="1840.70" y="272.0" width="4.6" height="45.00" fill="#26a69a"/><line x1="1848.30" y1="255.4" x2="1848.30" y2="289.0" stroke="#26a69a" stroke-width="1"/><rect x="1846.00" y="263.0" width="4.6" height="10.00" fill="#26a69a"/><line x1="1853.60" y1="234.6" x2="1853.60" y2="267.0" stroke="#26a69a" stroke-width="1"/><rect x="1851.30" y="247.5" width="4.6" height="15.50" fill="#26a69a"/><line x1="1858.90" y1="193.0" x2="1858.90" y2="246.5" stroke="#26a69a" stroke-width="1"/><rect x="1856.60" y="202.0" width="4.6" height="43.50" fill="#26a69a"/><line x1="1864.20" y1="188.0" x2="1864.20" y2="223.6" stroke="#ef5350" stroke-width="1"/><rect x="1861.90" y="202.0" width="4.6" height="8.80" fill="#ef5350"/><line x1="1869.50" y1="198.8" x2="1869.50" y2="225.0" stroke="#ef5350" stroke-width="1"/><rect x="1867.20" y="209.8" width="4.6" height="9.90" fill="#ef5350"/><polyline points="560.4,536.4 565.7,533.9 571.0,529.7 576.3,529.5 581.6,528.3 586.9,530.2 592.2,530.9 597.5,534.2 602.8,538.8 608.1,543.5 613.4,546.3 618.7,550.7 624.0,549.9 629.3,547.9 634.6,547.5 639.9,545.6 645.2,542.3 650.5,539.4 655.8,534.4 661.1,529.4 666.4,527.3 671.7,527.7 677.0,524.7 682.3,518.3 687.6,515.1 692.9,506.4 698.2,507.2 703.5,511.6 708.8,518.6 714.1,521.1 719.4,526.7 724.7,529.6 730.0,528.5 735.3,524.6 740.6,524.0 745.9,519.4 751.2,516.2 756.5,514.1 761.8,513.8 767.1,513.0 772.4,513.9 777.7,513.9 783.0,513.7 788.3,512.8 793.6,509.4 798.9,511.2 804.2,511.9 809.5,514.8 814.8,515.9 820.1,515.9 825.4,514.6 830.7,514.7 836.0,515.0 841.3,514.3 846.6,516.2 851.9,519.7 857.2,522.9 862.5,526.6 867.8,528.5 873.1,526.8 878.4,526.4 883.7,523.2 889.0,520.5 894.3,517.7 899.6,514.0 904.9,507.3 910.2,503.8 915.5,498.3 920.8,492.2 926.1,481.6 931.4,463.9 936.7,450.0 942.0,439.2 947.3,427.4 952.6,416.6 957.9,402.7 963.2,400.7 968.5,397.0 973.8,396.3 979.1,394.5 984.4,394.8 989.7,400.0 995.0,403.1 1000.3,409.3 1005.6,416.3 1010.9,420.3 1016.2,421.3 1021.5,420.6 1026.8,421.6 1032.1,417.6 1037.4,413.9 1042.7,411.6 1048.0,410.0 1053.3,407.3 1058.6,405.2 1063.9,399.2 1069.2,393.6 1074.5,391.4 1079.8,390.0 1085.1,389.3 1090.4,391.0 1095.7,392.7 1101.0,392.7 1106.3,390.6 1111.6,387.6 1116.9,384.1 1122.2,381.3 1127.5,376.3 1132.8,371.4 1138.1,371.3 1143.4,372.3 1148.7,376.8 1154.0,381.0 1159.3,382.1 1164.6,383.9 1169.9,385.7 1175.2,384.8 1180.5,384.7 1185.8,387.2 1191.1,389.1 1196.4,389.7 1201.7,387.8 1207.0,385.7 1212.3,380.5 1217.6,376.7 1222.9,373.5 1228.2,376.0 1233.5,379.1 1238.8,381.8 1244.1,381.6 1249.4,376.6 1254.7,360.4 1260.0,360.5 1265.3,358.4 1270.6,361.6 1275.9,365.7 1281.2,371.7 1286.5,375.5 1291.8,381.7 1297.1,387.3 1302.4,392.1 1307.7,393.6 1313.0,394.3 1318.3,397.1 1323.6,400.8 1328.9,404.0 1334.2,406.0 1339.5,406.7 1344.8,408.3 1350.1,408.4 1355.4,408.3 1360.7,406.2 1366.0,405.5 1371.3,404.7 1376.6,402.9 1381.9,400.5 1387.2,401.0 1392.5,401.9 1397.8,402.5 1403.1,404.4 1408.4,405.7 1413.7,405.8 1419.0,403.2 1424.3,402.9 1429.6,402.9 1434.9,403.4 1440.2,404.6 1445.5,404.6 1450.8,402.7 1456.1,401.5 1461.4,398.5 1466.7,393.2 1472.0,388.5 1477.3,383.3 1482.6,381.2 1487.9,378.1 1493.2,372.0 1498.5,370.8 1503.8,370.5 1509.1,369.3 1514.4,366.6 1519.7,363.9 1525.0,358.6 1530.3,357.8 1535.6,354.5 1540.9,348.1 1546.2,346.5 1551.5,348.8 1556.8,350.4 1562.1,350.9 1567.4,351.2 1572.7,350.9 1578.0,352.8 1583.3,356.4 1588.6,359.4 1593.9,360.9 1599.2,364.0 1604.5,366.5 1609.8,368.3 1615.1,371.2 1620.4,374.1 1625.7,374.6 1631.0,376.0 1636.3,374.0 1641.6,372.5 1646.9,370.1 1652.2,368.8 1657.5,369.0 1662.8,370.6 1668.1,371.7 1673.4,371.8 1678.7,370.5 1684.0,369.6 1689.3,367.4 1694.6,369.1 1699.9,370.4 1705.2,370.5 1710.5,369.3 1715.8,365.9 1721.1,361.4 1726.4,360.4 1731.7,358.5 1737.0,355.5 1742.3,352.5 1747.6,350.1 1752.9,348.9 1758.2,346.7 1763.5,345.5 1768.8,346.8 1774.1,347.9 1779.4,351.8 1784.7,353.7 1790.0,354.0 1795.3,353.2 1800.6,353.8 1805.9,353.1 1811.2,352.4 1816.5,352.5 1821.8,352.4 1827.1,347.6 1832.4,342.8 1837.7,336.8 1843.0,322.4 1848.3,309.2 1853.6,295.5 1858.9,274.7 1864.2,260.5 1869.5,251.4" fill="none" stroke="#6a1b9a" stroke-width="2" stroke-linejoin="round"/><polyline points="560.1,674.4 574.1,668.5 596.2,662.6 622.6,653.1 640.3,650.6 662.4,641.8 687.4,635.4 697.6,631.5 710.9,629.6 731.5,627.1 755.0,624.0 783.0,619.7 812.4,614.9 835.0,612.6 841.3,612.0 856.3,604.6 872.6,599.6 892.7,596.4 907.7,592.0 920.3,588.7 932.8,578.3 940.3,575.0 947.8,570.8 952.8,569.0 957.8,565.0 962.9,551.3 967.9,543.2 977.9,530.7 990.0,522.1 999.5,512.7 1015.2,504.8 1027.8,496.1 1042.0,490.6 1053.0,488.2 1064.0,484.8 1076.7,478.8 1090.8,474.8 1116.0,469.3 1127.0,464.6 1138.1,457.5 1152.3,450.4 1168.0,445.7 1179.0,442.5 1193.2,439.7 1201.1,438.3 1213.7,434.3 1227.9,429.9 1248.4,424.7 1257.8,418.1 1270.4,414.7 1282.0,411.5 1313.4,408.3 1348.0,404.9 1362.5,403.8 1380.0,400.9 1393.2,398.7 1407.9,397.2 1422.5,394.3 1435.6,392.1 1450.3,390.4 1459.0,387.0 1467.8,385.1 1476.6,384.0 1486.8,385.5 1505.0,384.8 1514.5,384.6 1524.6,383.4 1534.6,382.1 1540.9,379.6 1552.2,378.4 1564.7,377.1 1577.2,376.1 1596.0,375.6 1627.4,375.6 1652.5,375.4 1662.0,375.9 1687.2,374.9 1724.9,373.5 1753.0,372.6 1778.9,372.4 1784.4,376.0 1792.5,377.9 1806.2,377.9 1819.9,376.5 1828.0,373.8 1836.3,371.6 1844.5,361.5 1855.4,346.4 1865.0,327.3 1869.0,324.6" fill="none" stroke="#1e6414" stroke-width="2" stroke-linejoin="round"/><polyline points="560.4,733.0 565.7,732.2 571.0,730.2 576.3,736.9 581.6,738.4 586.9,741.4 592.2,740.6 597.5,747.3 602.8,751.5 608.1,754.0 613.4,752.3 618.7,756.2 624.0,749.0 629.3,747.6 634.6,749.8 639.9,747.3 645.2,744.4 650.5,743.6 655.8,740.1 661.1,738.4 666.4,742.8 671.7,747.8 677.0,742.8 682.3,738.1 687.6,741.9 692.9,735.5 698.2,749.8 703.5,756.5 708.8,761.6 714.1,757.4 719.4,762.4 724.7,760.7 730.0,756.2 735.3,751.8 740.6,755.2 745.9,749.8 751.2,750.3 756.5,751.5 761.8,754.0 767.1,752.8 772.4,756.0 777.7,755.7 783.0,754.0 788.3,752.8 793.6,746.1 798.9,757.4 804.2,756.0 809.5,761.0 814.8,758.7 820.1,756.0 825.4,754.0 830.7,756.5 836.0,757.0 841.3,755.7 846.6,760.7 851.9,765.8 857.2,767.1 862.5,769.5 867.8,766.6 873.1,757.7 878.4,759.4 883.7,753.2 889.0,752.8 894.3,750.7 899.6,747.3 904.9,740.1 910.2,744.8 915.5,740.2 920.8,737.5 926.1,730.2 931.4,722.9 936.7,722.9 942.0,722.9 947.3,720.7 952.6,719.6 957.9,717.4 963.2,738.1 968.5,736.4 973.8,740.1 979.1,739.2 984.4,743.6 989.7,751.2 995.0,751.0 1000.3,756.5 1005.6,760.2 1010.9,757.7 1016.2,754.5 1021.5,752.3 1026.8,755.2 1032.1,747.8 1037.4,747.6 1042.7,748.5 1048.0,749.0 1053.3,747.3 1058.6,747.0 1063.9,740.2 1069.2,738.9 1074.5,744.4 1079.8,746.0 1085.1,746.1 1090.4,751.8 1095.7,753.2 1101.0,750.3 1106.3,746.5 1111.6,743.6 1116.9,741.9 1122.2,741.4 1127.5,736.9 1132.8,735.0 1138.1,748.6 1143.4,750.7 1148.7,759.4 1154.0,761.1 1159.3,756.5 1164.6,758.7 1169.9,759.4 1175.2,754.0 1180.5,756.0 1185.8,761.9 1191.1,761.9 1196.4,759.6 1201.7,752.8 1207.0,751.8 1212.3,743.9 1217.6,744.8 1222.9,743.9 1228.2,759.1 1233.5,761.2 1238.8,761.9 1244.1,756.5 1249.4,746.5 1254.7,731.8 1260.0,754.0 1265.3,751.8 1270.6,758.2 1275.9,759.9 1281.2,763.6 1286.5,762.8 1291.8,766.3 1297.1,767.5 1302.4,768.6 1307.7,764.1 1313.0,762.9 1318.3,765.8 1323.6,768.6 1328.9,769.1 1334.2,768.0 1339.5,766.1 1344.8,767.8 1350.1,764.9 1355.4,764.6 1360.7,759.9 1366.0,762.9 1371.3,761.1 1376.6,758.2 1381.9,755.7 1387.2,761.9 1392.5,762.8 1397.8,762.8 1403.1,766.1 1408.4,766.1 1413.7,762.1 1419.0,754.9 1424.3,759.9 1429.6,759.9 1434.9,762.4 1440.2,764.1 1445.5,761.1 1450.8,754.9 1456.1,756.0 1461.4,751.0 1466.7,742.6 1472.0,741.4 1477.3,738.4 1482.6,744.8 1487.9,742.3 1493.2,736.0 1498.5,746.8 1503.8,749.3 1509.1,747.3 1514.4,743.6 1519.7,742.3 1525.0,737.2 1530.3,747.0 1535.6,742.3 1540.9,737.2 1546.2,745.1 1551.5,753.7 1556.8,753.7 1562.1,752.0 1567.4,751.2 1572.7,751.0 1578.0,756.0 1583.3,761.2 1588.6,762.1 1593.9,759.9 1599.2,764.4 1604.5,765.4 1609.8,764.9 1615.1,768.3 1620.4,770.0 1625.7,762.8 1631.0,766.1 1636.3,757.0 1641.6,757.0 1646.9,754.0 1652.2,755.7 1657.5,759.9 1662.8,764.4 1668.1,764.4 1673.4,760.2 1678.7,756.5 1684.0,756.0 1689.3,751.8 1694.6,762.1 1699.9,762.1 1705.2,759.6 1710.5,755.4 1715.8,748.1 1721.1,743.6 1726.4,752.0 1731.7,749.8 1737.0,746.1 1742.3,743.9 1747.6,743.2 1752.9,747.0 1758.2,743.8 1763.5,744.9 1768.8,754.2 1774.1,755.4 1779.4,764.7 1784.7,760.9 1790.0,757.1 1795.3,753.7 1800.6,758.1 1805.9,753.9 1811.2,753.9 1816.5,756.9 1821.8,755.8 1827.1,742.0 1832.4,739.9 1837.7,736.1 1843.0,723.9 1848.3,722.2 1853.6,719.7 1858.9,715.3 1864.2,720.1 1869.5,725.2" fill="none" stroke="#e0168c" stroke-width="2" stroke-linejoin="round"/><path d="M926.9 402 L931.4 398 L935.9 402 L931.4 406 Z" fill="#fcc24a"/><path d="M958.7 394 L963.2 390 L967.7 394 L963.2 398 Z" fill="#fcc24a"/><path d="M1849.1 245.5 L1853.6 241.5 L1858.1 245.5 L1853.6 249.5 Z" fill="#fcc24a"/><path d="M1854.4 202 L1858.9 198 L1863.4 202 L1858.9 206 Z" fill="#fcc24a"/><line x1="1270.6" y1="178" x2="1270.6" y2="770" stroke="#bbb" stroke-width="1" stroke-dasharray="4 3"/><line x1="558" y1="516.5" x2="1886" y2="516.5" stroke="#999" stroke-width="1" stroke-dasharray="4 3"/><circle cx="1270.6" cy="361.6" r="3.2" fill="#fff" stroke="#6a1b9a" stroke-width="2"/><circle cx="1270.6" cy="414.3" r="3.2" fill="#fff" stroke="#1e6414" stroke-width="2"/><circle cx="1270.6" cy="758.2" r="3.2" fill="#fff" stroke="#e0168c" stroke-width="2"/><rect x="562.5" y="786.5" width="1324" height="30" rx="3" fill="#fbfcfe" stroke="#d2dbee" stroke-width="1"/><polygon points="563,816 563.0,795.4 626.0,792.9 790.7,794.6 858.6,797.5 912.0,797.5 918.0,798.5 924.0,797.5 983.6,794.6 1008.6,792.1 1065.7,795.7 1076.4,798.9 1119.3,800.7 1162.0,802.9 1253.6,802.9 1267.9,809.6 1296.4,808.9 1350.0,805.4 1357.0,808.9 1396.4,807.1 1410.7,809.6 1489.3,807.9 1517.9,804.6 1617.9,803.6 1689.3,804.6 1705.4,800.7 1715.0,800.0 1715,816" fill="#f2f5fb"/><polyline points="563.0,795.4 626.0,792.9 790.7,794.6 858.6,797.5 912.0,797.5 918.0,798.5 924.0,797.5 983.6,794.6 1008.6,792.1 1065.7,795.7 1076.4,798.9 1119.3,800.7 1162.0,802.9 1253.6,802.9 1267.9,809.6 1296.4,808.9 1350.0,805.4 1357.0,808.9 1396.4,807.1 1410.7,809.6 1489.3,807.9 1517.9,804.6 1617.9,803.6 1689.3,804.6 1705.4,800.7 1715.0,800.0" fill="none" stroke="#d5dcec" stroke-width="1"/><rect x="1715" y="787" width="172" height="29" fill="#e4ebfb"/><polygon points="1715,816 1715.0,800.0 1728.6,798.9 1760.7,798.9 1767.9,796.4 1814.3,795.4 1886.0,795.4 1887,816" fill="#d2e0f9"/><polyline points="1715.0,800.0 1728.6,798.9 1760.7,798.9 1767.9,796.4 1814.3,795.4 1886.0,795.4" fill="none" stroke="#a8bfee" stroke-width="1"/><rect x="1715" y="780.5" width="172" height="6.5" fill="#dde3f1"/><path d="M1797.5 781.5 v4 M1799.5 781.5 v4 M1801.5 781.5 v4" stroke="#fff" stroke-width="1"/><circle cx="1715" cy="801.5" r="11.5" fill="#fff" stroke="#8fa0c2" stroke-width="1"/><rect x="1710.7" y="796" width="2.4" height="11" fill="#a7b4d0"/><rect x="1716.9" y="796" width="2.4" height="11" fill="#a7b4d0"/><circle cx="1886.5" cy="801.5" r="11.5" fill="#fff" stroke="#8fa0c2" stroke-width="1"/><rect x="1882.2" y="796" width="2.4" height="11" fill="#a7b4d0"/><rect x="1888.4" y="796" width="2.4" height="11" fill="#a7b4d0"/></svg>
<div style="position:absolute;left:481px;top:505px;width:75px;height:22px;background:#6b6b6b;border-radius:3px"></div>
<div class="t" style="left:487.96px;top:508.99px;font-size:12.36px;letter-spacing:0.761px;color:#eee;">61,802.40</div>
<div style="position:absolute;left:551px;top:187px;width:281px;height:411px;background:rgba(64,64,64,0.7);border-radius:4px;box-shadow:1px 2px 10px rgba(0,0,0,0.2)"></div>
<div class="t" style="left:561.00px;top:198.24px;font-size:14.42px;letter-spacing:0.822px;color:#fff;">2024-05-04 03:40:00</div>
<div style="position:absolute;left:561px;top:222.5px;width:10px;height:10px;border-radius:50%;background:#d0168c"></div>
<div class="t" style="left:579.00px;top:220.24px;font-size:14.42px;letter-spacing:0.861px;color:#fff;">rsi</div>
<div class="t" style="left:659.83px;top:219.65px;font-size:15.12px;letter-spacing:1.403px;color:#fff;font-weight:700;">50.22577020190704</div>
<div class="t" style="left:561.00px;top:264.24px;font-size:14.42px;letter-spacing:0.822px;color:#fff;">2024-05-04 03:40:00</div>
<div style="position:absolute;left:561px;top:288.5px;width:10px;height:10px;border-radius:50%;background:#6f6f6f"></div>
<div class="t" style="left:579.00px;top:286.24px;font-size:14.42px;letter-spacing:0.795px;color:#fff;">Volume</div>
<div class="t" style="left:737.75px;top:285.65px;font-size:15.12px;letter-spacing:1.577px;color:#fff;font-weight:700;">118.66598</div>
<div class="t" style="left:561.00px;top:330.24px;font-size:14.42px;letter-spacing:0.822px;color:#fff;">2024-05-04 03:40:00</div>
<div style="position:absolute;left:561px;top:354.5px;width:10px;height:10px;border-radius:50%;background:#ef5350"></div>
<div class="t" style="left:579.00px;top:352.24px;font-size:14.42px;letter-spacing:0.502px;color:#fff;">Candles</div>
<div style="position:absolute;left:561px;top:379.5px;width:4px;height:4px;border-radius:50%;background:#ef5350"></div>
<div class="t" style="left:572.50px;top:374.24px;font-size:14.42px;letter-spacing:0.955px;color:#fff;">open</div>
<div class="t" style="left:742.18px;top:373.65px;font-size:15.12px;letter-spacing:1.446px;color:#fff;font-weight:700;">63,173.98</div>
<div style="position:absolute;left:561px;top:401.5px;width:4px;height:4px;border-radius:50%;background:#ef5350"></div>
<div class="t" style="left:572.50px;top:396.24px;font-size:14.42px;letter-spacing:0.904px;color:#fff;">highest</div>
<div class="t" style="left:742.18px;top:395.65px;font-size:15.12px;letter-spacing:1.446px;color:#fff;font-weight:700;">63,173.99</div>
<div style="position:absolute;left:561px;top:423.5px;width:4px;height:4px;border-radius:50%;background:#ef5350"></div>
<div class="t" style="left:572.50px;top:418.24px;font-size:14.42px;letter-spacing:0.886px;color:#fff;">lowest</div>
<div class="t" style="left:742.18px;top:417.65px;font-size:15.12px;letter-spacing:1.446px;color:#fff;font-weight:700;">62,976.02</div>
<div style="position:absolute;left:561px;top:445.5px;width:4px;height:4px;border-radius:50%;background:#ef5350"></div>
<div class="t" style="left:572.50px;top:440.24px;font-size:14.42px;letter-spacing:0.600px;color:#fff;">close</div>
<div class="t" style="left:742.18px;top:439.65px;font-size:15.12px;letter-spacing:1.446px;color:#fff;font-weight:700;">62,990.96</div>
<div style="position:absolute;left:561px;top:464.5px;width:10px;height:10px;border-radius:50%;background:#00ff26"></div>
<div class="t" style="left:579.00px;top:462.24px;font-size:14.42px;letter-spacing:0.898px;color:#fff;">Entry</div>
<div class="t" style="left:815.19px;top:461.65px;font-size:15.12px;letter-spacing:0.776px;color:#fff;font-weight:700;">-</div>
<div style="position:absolute;left:561px;top:486.5px;width:10px;height:10px;border-radius:50%;background:#fbbf24"></div>
<div class="t" style="left:579.00px;top:484.24px;font-size:14.42px;letter-spacing:0.824px;color:#fff;">Exit</div>
<div class="t" style="left:815.19px;top:483.65px;font-size:15.12px;letter-spacing:0.776px;color:#fff;font-weight:700;">-</div>
<div style="position:absolute;left:561px;top:508.5px;width:10px;height:10px;border-radius:50%;background:#00ff26"></div>
<div class="t" style="left:579.00px;top:506.24px;font-size:14.42px;letter-spacing:0.898px;color:#fff;">Entry</div>
<div class="t" style="left:815.19px;top:505.65px;font-size:15.12px;letter-spacing:0.776px;color:#fff;font-weight:700;">-</div>
<div style="position:absolute;left:561px;top:530.5px;width:10px;height:10px;border-radius:50%;background:#fbbf24"></div>
<div class="t" style="left:579.00px;top:528.24px;font-size:14.42px;letter-spacing:0.824px;color:#fff;">Exit</div>
<div class="t" style="left:815.19px;top:527.65px;font-size:15.12px;letter-spacing:0.776px;color:#fff;font-weight:700;">-</div>
<div style="position:absolute;left:561px;top:552.5px;width:10px;height:10px;border-radius:50%;background:#6a1b9a"></div>
<div class="t" style="left:579.00px;top:550.24px;font-size:14.42px;letter-spacing:0.663px;color:#fff;">ema_8</div>
<div class="t" style="left:644.77px;top:549.65px;font-size:15.12px;letter-spacing:1.383px;color:#fff;font-weight:700;">63,085.948152171906</div>
<div style="position:absolute;left:561px;top:574.5px;width:10px;height:10px;border-radius:50%;background:#1e6414"></div>
<div class="t" style="left:579.00px;top:572.24px;font-size:14.42px;letter-spacing:1.124px;color:#fff;">rvwap</div>
<div class="t" style="left:654.51px;top:571.65px;font-size:15.12px;letter-spacing:1.386px;color:#fff;font-weight:700;">62,648.75785661418</div>
<div style="position:absolute;left:480px;top:826px;width:1419px;height:200px;box-sizing:border-box;border:1px solid #d3d3d3;border-radius:6px;background:#fff;overflow:hidden"><div style="height:30px;background:#f7f7f7;border-bottom:1px solid #d3d3d3"></div></div>
<div class="t" style="left:1144.52px;top:833.89px;font-size:14.83px;letter-spacing:0.423px;color:#212529;">Open Trades</div>
<div class="t" style="left:498.00px;top:864.93px;font-size:13.61px;letter-spacing:1.540px;color:#000;font-weight:700;">ID</div>
<div class="t" style="left:554.00px;top:864.93px;font-size:13.61px;letter-spacing:0.737px;color:#000;font-weight:700;">Pair</div>
<div class="t" style="left:645.00px;top:864.93px;font-size:13.61px;letter-spacing:0.821px;color:#000;font-weight:700;">Amount</div>
<div class="t" style="left:803.00px;top:864.93px;font-size:13.61px;letter-spacing:0.873px;color:#000;font-weight:700;">Stake amount</div>
<div class="t" style="left:1014.00px;top:864.93px;font-size:13.61px;letter-spacing:0.925px;color:#000;font-weight:700;">Open rate</div>
<div class="t" style="left:1191.00px;top:864.93px;font-size:13.61px;letter-spacing:0.906px;color:#000;font-weight:700;">Current rate</div>
<div class="t" style="left:1408.50px;top:864.93px;font-size:13.61px;letter-spacing:0.751px;color:#000;font-weight:700;">Current profit %</div>
<div class="t" style="left:1646.50px;top:864.93px;font-size:13.61px;letter-spacing:0.899px;color:#000;font-weight:700;">Open date</div>
<div class="t" style="left:1808.00px;top:864.93px;font-size:13.61px;letter-spacing:0.465px;color:#000;font-weight:700;">Actions</div>
<div style="position:absolute;left:481px;top:885px;width:1417px;height:1px;background:#dee2e6"></div>
<div class="t" style="left:1109.20px;top:893.47px;font-size:12.98px;letter-spacing:0.632px;color:#212529;">Currently no open trades.</div>
<div style="position:absolute;left:481px;top:912.5px;width:1417px;height:1px;background:#dee2e6"></div>
</body></html>
